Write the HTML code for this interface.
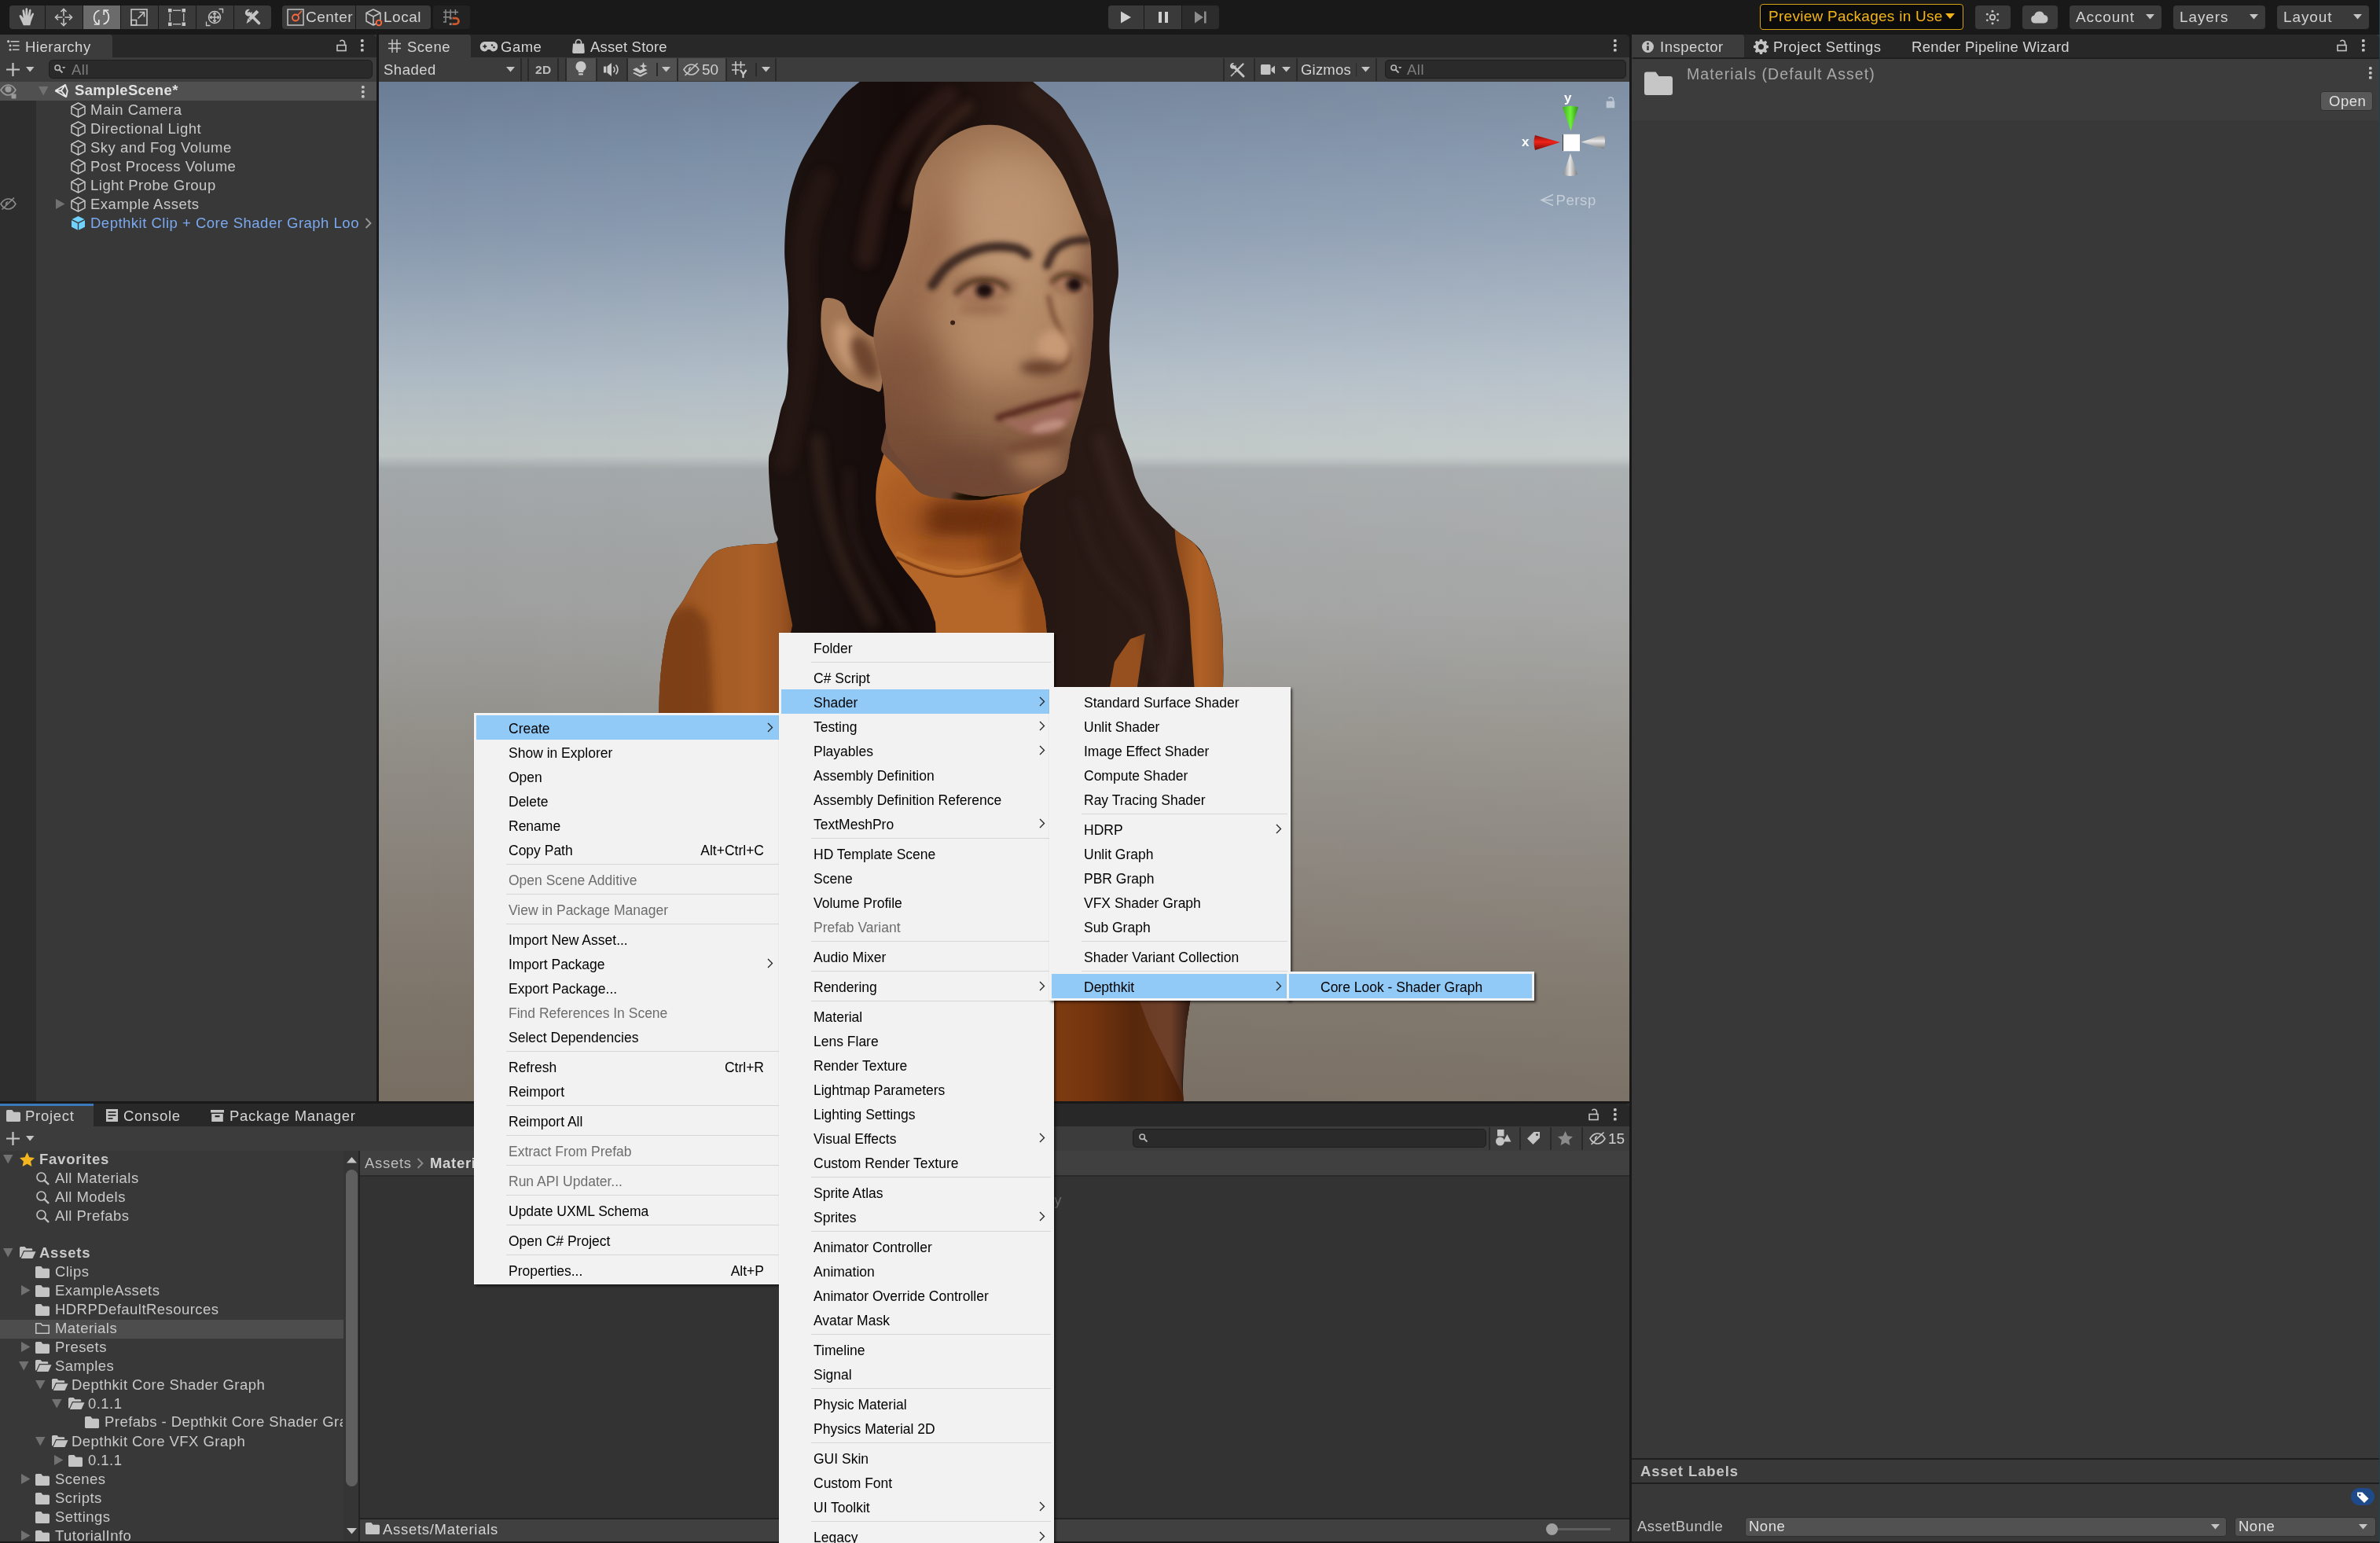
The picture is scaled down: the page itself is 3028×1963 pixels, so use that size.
<!DOCTYPE html>
<html><head><meta charset="utf-8"><title>Unity</title>
<style>
*{box-sizing:border-box;margin:0;padding:0}
html,body{width:3028px;height:1963px;overflow:hidden;background:#191919}
body{position:relative;font-family:"Liberation Sans",sans-serif;font-size:18.5px;letter-spacing:.5px;color:#c9c9c9;-webkit-font-smoothing:antialiased}
.a{position:absolute}
.t{position:absolute;white-space:pre;line-height:24px;height:24px}
.b{font-weight:700}
svg{position:absolute;overflow:visible}
.m{position:absolute;background:#f2f2f2;border:1px solid #f7f5f3;box-shadow:2px 2px 3px rgba(0,0,0,.6);font-size:17.5px;letter-spacing:0;color:#000}
.m .i{position:absolute;left:2px;right:2px;height:31px;line-height:34px;white-space:pre}
.m .i span{position:absolute}
.m .h{background:#91c9f7}
.m .d{color:#6d6d6d}
.m .s{position:absolute;height:1px;background:#d7d7d7}
</style></head><body><div id="w" style="position:absolute;left:0;top:0;width:3028px;height:1963px;will-change:transform">
<div class="a" style="left:0px;top:0px;width:3028px;height:44px;background:#191919;"></div>
<div class="a" style="left:12px;top:7px;width:45px;height:30px;background:#3a3a3a;border-radius:4px 0 0 4px;"></div>
<div class="a" style="left:58px;top:7px;width:47px;height:30px;background:#3a3a3a;"></div>
<div class="a" style="left:106px;top:7px;width:47px;height:30px;background:#6b6b6b;"></div>
<div class="a" style="left:154px;top:7px;width:47px;height:30px;background:#3a3a3a;"></div>
<div class="a" style="left:202px;top:7px;width:47px;height:30px;background:#3a3a3a;"></div>
<div class="a" style="left:250px;top:7px;width:47px;height:30px;background:#3a3a3a;"></div>
<div class="a" style="left:298px;top:7px;width:47px;height:30px;background:#3a3a3a;border-radius:0 4px 4px 0;"></div>
<svg style="left:20.5px;top:8.5px;" width="28" height="28" viewBox="1 1 23 23"><path fill="#c4c4c4" d="M4.200 11.200c-.9-1.600.8-2.600 1.900-1.400l2 2.600L7.100 5c-.2-1.600 1.700-1.900 2.100-.4l1.200 5.600V3.200c0-1.600 2.100-1.600 2.200 0l.3 7 1.300-6c.4-1.500 2.300-1 2 .5l-.9 6.600 1.900-3.600c.8-1.300 2.400-.4 1.800 1l-2.400 6.200c-.6 1.600-1 3.600-1.400 5.100H8.300c-.6-1.300-2.600-5.500-4.100-8.800z"/></svg>
<svg style="left:69px;top:10px;" width="24" height="24" viewBox="0 0 24 24"><g fill="none" stroke="#c4c4c4" stroke-width="1.6"><path d="M12 1.500v21M1.500 12h21"/><path d="M8.500 5L12 1.500 15.500 5M8.500 19l3.500 3.500 3.500-3.500M5 8.500L1.500 12 5 15.500M19 8.500l3.500 3.500-3.500 3.500"/></g><rect x="10.500" y="10.500" width="3" height="3" fill="#3a3a3a"/></svg>
<svg style="left:117px;top:10px;" width="24" height="24" viewBox="0 0 24 24"><g fill="none" stroke="#e4e4e4" stroke-width="1.700"><path d="M9.500 3.200A9.500 9.500 0 0 0 8.300 21"/><path d="M2.800 21h6v-6"/><path d="M14.500 20.800A9.500 9.500 0 0 0 15.700 3"/><path d="M21.200 3h-6v6"/></g></svg>
<svg style="left:165px;top:10px;" width="24" height="24" viewBox="0 0 24 24"><g fill="none" stroke="#c4c4c4" stroke-width="1.600"><rect x="2" y="2" width="20" height="20"/><rect x="2" y="15.500" width="6.500" height="6.500"/><path d="M10.500 13.500L18.500 5.500M12.500 5.500h6v6"/></g></svg>
<svg style="left:214px;top:11px;" width="22" height="22" viewBox="0 0 22 22"><g fill="#c4c4c4"><rect x="0" y="0" width="4.500" height="4.500"/><rect x="17.500" y="0" width="4.500" height="4.500"/><rect x="0" y="17.500" width="4.500" height="4.500"/><rect x="17.500" y="17.500" width="4.500" height="4.500"/><rect x="6" y="1.600" width="10" height="1.300"/><rect x="6" y="19.100" width="10" height="1.300"/><rect x="1.600" y="6" width="1.300" height="10"/><rect x="19.100" y="6" width="1.300" height="10"/></g></svg>
<svg style="left:261px;top:10px;" width="24" height="24" viewBox="0 0 24 24"><g fill="none" stroke="#c4c4c4" stroke-width="1.500"><circle cx="12" cy="12" r="7.500"/><path d="M12 6.500v11M6.500 12h11"/><path d="M10 8.300l2-2 2 2M10 15.700l2 2 2-2M8.300 10l-2 2 2 2M15.700 10l2 2-2 2"/><path d="M1.500 17.500v5h5M22.500 6.500v-5h-5" stroke-width="1.300"/></g></svg>
<svg style="left:310px;top:10px;" width="24" height="24" viewBox="0 0 24 24"><g stroke="#c4c4c4" fill="none"><path d="M7 7L19.500 19.500" stroke-width="3.600" stroke-linecap="round"/><path d="M17.800 4.200L7.500 14.500" stroke-width="4.200"/></g><path fill="#c4c4c4" d="M5.500 13.200l3.400 3.400-5.400 3.400z"/><path fill="#c4c4c4" d="M1.800 6.300a4.600 4.600 0 0 1 6-4.400L5 4.700l.5 2.300 2.300.500 2.800-2.800a4.600 4.600 0 0 1-4.400 6c-2.500 0-4.400-2-4.400-4.400z"/><path d="M19.300 2.700l2.200 2.200" stroke="#3a3a3a" stroke-width="1.200"/></svg>
<div class="a" style="left:359px;top:7px;width:93px;height:30px;background:#3a3a3a;border-radius:4px 0 0 4px;"></div>
<div class="a" style="left:453px;top:7px;width:95px;height:30px;background:#3a3a3a;border-radius:0 4px 4px 0;"></div>
<div class="a" style="left:551px;top:7px;width:47px;height:30px;background:#222;border-radius:4px;"></div>
<svg style="left:365px;top:11px;" width="22" height="22" viewBox="0 0 22 22"><rect x="1" y="1" width="20" height="20" fill="none" stroke="#c4c4c4" stroke-width="1.500"/><circle cx="11" cy="11.500" r="4" fill="none" stroke="#ff6a3d" stroke-width="1.800"/><path d="M14 8l5-5" stroke="#ff6a3d" stroke-width="1.500"/></svg>
<div class="t " style="left:389px;top:10px;font-size:19px;color:#d2d2d2">Center</div>
<svg style="left:464px;top:10px;" width="26" height="24" viewBox="0 0 26 24"><g fill="none" stroke="#c4c4c4" stroke-width="1.500" stroke-linejoin="round"><path d="M11 2l9 4.500v10.500l-9 5-9-5V6.500z"/><path d="M2 6.500l9 4.500 9-4.500M11 11v11"/></g><circle cx="18" cy="19" r="3.300" fill="#3a3a3a" stroke="#ff6a3d" stroke-width="1.800"/></svg>
<div class="t " style="left:488px;top:10px;font-size:19px;color:#d2d2d2">Local</div>
<svg style="left:564px;top:12px;" width="21" height="21" viewBox="0 0 21 21"><g fill="none" stroke="#8a8a8a" stroke-width="1.500"><path d="M3 0v16M9.200 0v9.500M15.400 0v7M0 3.500h19M0 9.700h9M0 15.900h4"/></g><g fill="#8a8a8a"><rect x="7.800" y="9.800" width="2.800" height="2.800"/><rect x="7.800" y="17.200" width="2.800" height="2.800"/></g><path d="M11.500 11.200h4.300a3.700 3.700 0 0 1 0 7.400h-4.300" fill="none" stroke="#c9572e" stroke-width="2.800"/></svg>
<div class="a" style="left:1410px;top:7px;width:45px;height:30px;background:#3a3a3a;border-radius:4px 0 0 4px;"></div>
<div class="a" style="left:1456px;top:7px;width:47px;height:30px;background:#3a3a3a;"></div>
<div class="a" style="left:1504px;top:7px;width:47px;height:30px;background:#2c2c2c;border-radius:0 4px 4px 0;"></div>
<svg style="left:1425px;top:14px;" width="16" height="16" viewBox="0 0 16 16"><path d="M1 .500L14 8 1 15.500z" fill="#d0d0d0"/></svg>
<svg style="left:1473px;top:14px;" width="14" height="16" viewBox="0 0 14 16"><rect x="1" y="1" width="4" height="14" fill="#d0d0d0"/><rect x="9" y="1" width="4" height="14" fill="#d0d0d0"/></svg>
<svg style="left:1520px;top:14px;" width="16" height="16" viewBox="0 0 16 16"><path d="M0 .500L11 8 0 15.500z" fill="#8c8c8c"/><rect x="12" y=".500" width="2.600" height="15" fill="#8c8c8c"/></svg>
<div class="a" style="left:2239px;top:5px;width:259px;height:33px;background:#0b0b0b;border:1.500px solid #d6a013;border-radius:4px;"></div>
<div class="t " style="left:2250px;top:9px;color:#f2b418;font-size:19px;letter-spacing:.27px">Preview Packages in Use</div>
<svg style="left:2475px;top:17px;" width="13" height="8" viewBox="0 0 13 8"><path d="M0 0h12L6 7z" fill="#f2b418"/></svg>
<div class="a" style="left:2513px;top:7px;width:45px;height:30px;background:#3a3a3a;border-radius:4px;"></div>
<svg style="left:2524px;top:11px;" width="22" height="22" viewBox="0 0 22 22"><circle cx="11" cy="11" r="3.200" fill="none" stroke="#c4c4c4" stroke-width="1.800"/><g fill="#c4c4c4"><circle cx="11" cy="3.300" r="1.500"/><circle cx="11" cy="18.700" r="1.500"/><circle cx="4.300" cy="7.200" r="1.400"/><circle cx="17.700" cy="7.200" r="1.400"/><circle cx="4.300" cy="14.800" r="1.400"/><circle cx="17.700" cy="14.800" r="1.400"/></g></svg>
<div class="a" style="left:2573px;top:7px;width:45px;height:30px;background:#3a3a3a;border-radius:4px;"></div>
<svg style="left:2583px;top:14px;" width="24" height="16" viewBox="0 0 24 16"><path fill="#c4c4c4" d="M6 15.500a5 5 0 0 1-.8-9.900A6.500 6.500 0 0 1 17.700 5a5.300 5.300 0 0 1 .3 10.500z"/></svg>
<div class="a" style="left:2633px;top:7px;width:117px;height:30px;background:#3a3a3a;border-radius:4px;"></div>
<div class="t " style="left:2641px;top:10px;font-size:19px;letter-spacing:.9px;color:#d2d2d2">Account</div>
<svg style="left:2730px;top:18px;" width="12" height="8" viewBox="0 0 12 8"><path d="M0 0h11L5.500 6.500z" fill="#c4c4c4"/></svg>
<div class="a" style="left:2765px;top:7px;width:117px;height:30px;background:#3a3a3a;border-radius:4px;"></div>
<div class="t " style="left:2773px;top:10px;font-size:19px;letter-spacing:.9px;color:#d2d2d2">Layers</div>
<svg style="left:2862px;top:18px;" width="12" height="8" viewBox="0 0 12 8"><path d="M0 0h11L5.500 6.500z" fill="#c4c4c4"/></svg>
<div class="a" style="left:2897px;top:7px;width:117px;height:30px;background:#3a3a3a;border-radius:4px;"></div>
<div class="t " style="left:2905px;top:10px;font-size:19px;letter-spacing:.9px;color:#d2d2d2">Layout</div>
<svg style="left:2994px;top:18px;" width="12" height="8" viewBox="0 0 12 8"><path d="M0 0h11L5.500 6.500z" fill="#c4c4c4"/></svg>
<div class="a" style="left:0px;top:44px;width:479px;height:1357px;background:#383838;"></div>
<div class="a" style="left:0px;top:44px;width:479px;height:29px;background:#282828;border-radius:0 5px 0 0;"></div>
<div class="a" style="left:0px;top:44px;width:143px;height:29px;background:#3c3c3c;border-radius:0 4px 0 0;"></div>
<svg style="left:9px;top:51px;" width="17" height="14" viewBox="0 0 17 14"><g fill="#c4c4c4"><circle cx="1.600" cy="1.700" r="1.600"/><circle cx="4" cy="7" r="1.500"/><circle cx="4" cy="12.200" r="1.500"/><rect x="4.500" y="1" width="11" height="1.500"/><rect x="7" y="6.300" width="8.500" height="1.500"/><rect x="7" y="11.500" width="8.500" height="1.500"/></g></svg>
<div class="t " style="left:32px;top:47.5px;color:#d4d4d4">Hierarchy</div>
<svg style="left:428px;top:49px;" width="14" height="17" viewBox="0 0 14 17"><g fill="none" stroke="#c4c4c4" stroke-width="1.600"><rect x="1" y="8.500" width="11" height="7"/><path d="M10.500 8.500V5.500a3.300 3.300 0 0 0-6-1.800"/></g></svg>
<svg style="left:458.5px;top:50px;" width="4" height="16" viewBox="0 0 4 16"><g fill="#c4c4c4"><rect x="0" y="0" width="3.600" height="3.600" rx="1.200"/><rect x="0" y="6" width="3.600" height="3.600" rx="1.200"/><rect x="0" y="12" width="3.600" height="3.600" rx="1.200"/></g></svg>
<div class="a" style="left:0px;top:73px;width:479px;height:31px;background:#3c3c3c;"></div>
<svg style="left:8px;top:80px;" width="17" height="17" viewBox="0 0 17 17"><path d="M8.500 0v17M0 8.500h17" stroke="#c4c4c4" stroke-width="2.200"/></svg>
<svg style="left:33px;top:85px;" width="11" height="7" viewBox="0 0 11 7"><path d="M0 0h10.500L5.200 6.500z" fill="#c4c4c4"/></svg>
<div class="a" style="left:62px;top:76px;width:412px;height:24px;background:#2a2a2a;border:1px solid #1e1e1e;border-radius:5px;"></div>
<svg style="left:69px;top:82px;" width="15" height="12" viewBox="0 0 15 12"><circle cx="4.200" cy="4.200" r="3.200" fill="none" stroke="#b4b4b4" stroke-width="1.600"/><path d="M6.500 6.500L10.500 10.500" stroke="#b4b4b4" stroke-width="1.900"/><path d="M10 3h4.500L12.200 5.500z" fill="#b4b4b4"/></svg>
<div class="t " style="left:91px;top:76.5px;color:#7e7e7e">All</div>
<div class="a" style="left:0px;top:127px;width:46px;height:1274px;background:#2d2d2d;"></div>
<div class="a" style="left:0px;top:104px;width:479px;height:23.5px;background:#505050;"></div>
<svg style="left:0px;top:107px;" width="22" height="19" viewBox="0 0 22 19"><path d="M1 7.500C4 2.500 8 1 10.500 1s6.500 1.500 9.500 6.500c-3 5-7 6.500-9.500 6.500S4 12.500 1 7.500z" fill="none" stroke="#9a9a9a" stroke-width="1.700"/><circle cx="10.500" cy="6.500" r="4" fill="#9a9a9a"/><rect x="14.500" y="12.500" width="6" height="6" rx="1" fill="#9a9a9a"/></svg>
<svg style="left:49px;top:109.5px;" width="13" height="12" viewBox="0 0 13 12"><path d="M0 0h12.500L6.200 11.500z" fill="#717171"/></svg>
<svg style="left:69px;top:105.5px;" width="18" height="18" viewBox="0 0 18 18"><g fill="none" stroke="#e8e8e8" stroke-width="1.800" stroke-linejoin="miter"><path d="M1.200 9.500L13.500 2.200M1.200 9.500L14.800 17.200M1.200 9.500h7.800M9 9.500L14.200 1.300M9 9.500L15.600 17.800M13.900 1.600L16.800 9.500 15.200 17.500"/></g></svg>
<div class="t b" style="left:95px;top:102.5px;color:#e0e0e0;letter-spacing:.35px">SampleScene*</div>
<svg style="left:459.5px;top:109px;" width="4" height="16" viewBox="0 0 4 16"><g fill="#c4c4c4"><rect x="0" y="0" width="3.600" height="3.600" rx="1.200"/><rect x="0" y="6" width="3.600" height="3.600" rx="1.200"/><rect x="0" y="12" width="3.600" height="3.600" rx="1.200"/></g></svg>
<svg style="left:90px;top:130.0px;" width="19" height="20" viewBox="0 0 19 20"><g fill="none" stroke="#c8c8c8" stroke-width="1.500" stroke-linejoin="round"><path d="M9.500 1l8.500 4.300v9.400L9.500 19 1 14.700V5.300z"/><path d="M1 5.300l8.500 4.400L18 5.300M9.500 9.700V19"/></g></svg>
<div class="t " style="left:115px;top:127.5px;">Main Camera</div>
<svg style="left:90px;top:154.0px;" width="19" height="20" viewBox="0 0 19 20"><g fill="none" stroke="#c8c8c8" stroke-width="1.500" stroke-linejoin="round"><path d="M9.500 1l8.500 4.300v9.400L9.500 19 1 14.700V5.300z"/><path d="M1 5.300l8.500 4.400L18 5.300M9.500 9.700V19"/></g></svg>
<div class="t " style="left:115px;top:151.5px;">Directional Light</div>
<svg style="left:90px;top:178.0px;" width="19" height="20" viewBox="0 0 19 20"><g fill="none" stroke="#c8c8c8" stroke-width="1.500" stroke-linejoin="round"><path d="M9.500 1l8.500 4.300v9.400L9.500 19 1 14.700V5.300z"/><path d="M1 5.300l8.500 4.400L18 5.300M9.500 9.700V19"/></g></svg>
<div class="t " style="left:115px;top:175.5px;">Sky and Fog Volume</div>
<svg style="left:90px;top:202.0px;" width="19" height="20" viewBox="0 0 19 20"><g fill="none" stroke="#c8c8c8" stroke-width="1.500" stroke-linejoin="round"><path d="M9.500 1l8.500 4.300v9.400L9.500 19 1 14.700V5.300z"/><path d="M1 5.300l8.500 4.400L18 5.300M9.500 9.700V19"/></g></svg>
<div class="t " style="left:115px;top:199.5px;">Post Process Volume</div>
<svg style="left:90px;top:226.0px;" width="19" height="20" viewBox="0 0 19 20"><g fill="none" stroke="#c8c8c8" stroke-width="1.500" stroke-linejoin="round"><path d="M9.500 1l8.500 4.300v9.400L9.500 19 1 14.700V5.300z"/><path d="M1 5.300l8.500 4.400L18 5.300M9.500 9.700V19"/></g></svg>
<div class="t " style="left:115px;top:223.5px;">Light Probe Group</div>
<svg style="left:90px;top:250.0px;" width="19" height="20" viewBox="0 0 19 20"><g fill="none" stroke="#c8c8c8" stroke-width="1.500" stroke-linejoin="round"><path d="M9.500 1l8.500 4.300v9.400L9.500 19 1 14.700V5.300z"/><path d="M1 5.300l8.500 4.400L18 5.300M9.500 9.700V19"/></g></svg>
<div class="t " style="left:115px;top:247.5px;">Example Assets</div>
<svg style="left:71px;top:253px;" width="12" height="13" viewBox="0 0 12 13"><path d="M0 0l11.500 6.500L0 13z" fill="#717171"/></svg>
<svg style="left:0px;top:250px;" width="22" height="18" viewBox="0 0 22 18"><path d="M1 9.500C4 4.500 8 3 10.500 3s6.500 1.500 9.500 6.500c-3 5-7 6.500-9.500 6.500S4 14.500 1 9.500z" fill="none" stroke="#8a8a8a" stroke-width="1.600"/><path d="M2.500 16.500L18 1.500" stroke="#8a8a8a" stroke-width="1.600"/><path d="M10.500 6a3.500 3.500 0 0 0-3 5.500z" fill="#8a8a8a"/></svg>
<svg style="left:90px;top:274px;" width="19" height="20" viewBox="0 0 19 20"><path d="M9.500 1l8.500 4.300v9.400L9.500 19 1 14.700V5.300z" fill="#6fd2ff"/><path d="M1 5.300l8.500 4.400L18 5.300M9.500 9.700V19" fill="none" stroke="#3a3a3a" stroke-width="1.300"/></svg>
<div class="t " style="left:115px;top:271.5px;color:#7aa9ef">Depthkit Clip + Core Shader Graph Loo</div>
<svg style="left:464px;top:277px;" width="9" height="14" viewBox="0 0 9 14"><path d="M1.500 1l6 6-6 6" fill="none" stroke="#9a9a9a" stroke-width="1.800"/></svg>
<div class="a" style="left:482px;top:44px;width:1591px;height:29px;background:#282828;border-radius:0 5px 0 0;"></div>
<div class="a" style="left:482px;top:44px;width:117px;height:29px;background:#3c3c3c;border-radius:0 4px 0 0;"></div>
<svg style="left:494px;top:50px;" width="16" height="17" viewBox="0 0 16 17"><g stroke="#c4c4c4" stroke-width="1.500" fill="none"><path d="M5 0v17M11 0v17M0 5.500h16M0 11.500h16"/></g></svg>
<div class="t " style="left:518px;top:47.5px;color:#d4d4d4">Scene</div>
<svg style="left:611px;top:53px;" width="22" height="13" viewBox="0 0 22 13"><path fill="#c4c4c4" d="M5.500 0h11a5.500 6 0 0 1 0 12.500c-1.800 0-3-1-4-2.500h-3c-1 1.500-2.200 2.500-4 2.500a5.500 6 0 0 1 0-12.500z"/><g fill="#282828"><rect x="3.300" y="5.200" width="5" height="1.700"/><rect x="4.950" y="3.550" width="1.700" height="5"/><circle cx="15" cy="4.500" r="1.200"/><circle cx="17.500" cy="7.200" r="1.200"/></g></svg>
<div class="t " style="left:637px;top:47.5px;color:#d4d4d4">Game</div>
<svg style="left:728px;top:50px;" width="16" height="18" viewBox="0 0 16 18"><path fill="#c4c4c4" d="M1 5.500h14l.8 10.500a1.800 1.800 0 0 1-1.800 2H2a1.800 1.800 0 0 1-1.800-2z"/><path d="M4.500 7V4a3.500 3.500 0 0 1 7 0v3" fill="none" stroke="#c4c4c4" stroke-width="1.600"/></svg>
<div class="t " style="left:751px;top:47.5px;color:#d4d4d4;letter-spacing:.2px">Asset Store</div>
<svg style="left:2052.5px;top:50px;" width="4" height="16" viewBox="0 0 4 16"><g fill="#c4c4c4"><rect x="0" y="0" width="3.600" height="3.600" rx="1.200"/><rect x="0" y="6" width="3.600" height="3.600" rx="1.200"/><rect x="0" y="12" width="3.600" height="3.600" rx="1.200"/></g></svg>
<div class="a" style="left:482px;top:73px;width:1591px;height:31px;background:#3c3c3c;"></div>
<div class="t " style="left:488px;top:76.5px;color:#d4d4d4">Shaded</div>
<svg style="left:644px;top:85px;" width="12" height="8" viewBox="0 0 12 8"><path d="M0 0h11L5.500 6.500z" fill="#c4c4c4"/></svg>
<div class="a" style="left:662px;top:74px;width:1.5px;height:29px;background:#2a2a2a;"></div>
<div class="a" style="left:671px;top:74px;width:1.5px;height:29px;background:#2a2a2a;"></div>
<div class="a" style="left:709px;top:74px;width:1.5px;height:29px;background:#2a2a2a;"></div>
<div class="a" style="left:719px;top:74px;width:1.5px;height:29px;background:#2a2a2a;"></div>
<div class="a" style="left:758px;top:74px;width:1.5px;height:29px;background:#2a2a2a;"></div>
<div class="a" style="left:797px;top:74px;width:1.5px;height:29px;background:#2a2a2a;"></div>
<div class="a" style="left:861px;top:74px;width:1.5px;height:29px;background:#2a2a2a;"></div>
<div class="a" style="left:923px;top:74px;width:1.5px;height:29px;background:#2a2a2a;"></div>
<div class="a" style="left:986px;top:74px;width:1.5px;height:29px;background:#2a2a2a;"></div>
<div class="a" style="left:1556px;top:74px;width:1.5px;height:29px;background:#2a2a2a;"></div>
<div class="a" style="left:1595px;top:74px;width:1.5px;height:29px;background:#2a2a2a;"></div>
<div class="a" style="left:1649px;top:74px;width:1.5px;height:29px;background:#2a2a2a;"></div>
<div class="a" style="left:1750px;top:74px;width:1.5px;height:29px;background:#2a2a2a;"></div>
<div class="t " style="left:681px;top:76.5px;color:#bcbcbc;font-weight:700;font-size:15.5px;letter-spacing:.3px">2D</div>
<div class="a" style="left:720.5px;top:74px;width:37.5px;height:29px;background:#505050;"></div>
<div class="a" style="left:798.5px;top:74px;width:62.5px;height:29px;background:#505050;"></div>
<div class="a" style="left:862.5px;top:74px;width:60.5px;height:29px;background:#505050;"></div>
<svg style="left:732px;top:78px;" width="14" height="20" viewBox="0 0 14 20"><path fill="#c8c8c8" d="M7 0a6.500 6.500 0 0 1 3.300 12.100V14H3.700v-1.900A6.500 6.500 0 0 1 7 0z"/><rect x="4" y="15.300" width="6" height="2.300" rx="1" fill="#c8c8c8"/></svg>
<svg style="left:768px;top:80px;" width="20" height="17" viewBox="0 0 20 17"><rect x="0" y="4.500" width="3.300" height="8" fill="#c8c8c8"/><path d="M4.500 4.500L10 0v17l-5.500-4.500z" fill="#c8c8c8"/><path d="M12.500 5a5 5 0 0 1 0 7M15.500 2.500a8.500 8.500 0 0 1 0 12" fill="none" stroke="#c8c8c8" stroke-width="1.700"/></svg>
<svg style="left:805px;top:79px;" width="22" height="19" viewBox="0 0 22 19"><path fill="#c8c8c8" d="M0 9.500l5-2.500 4.500 3.500 5-2.500 4 2-9 4.500zM0 14l2.200-1.100 7.300 3.600 7.300-3.600L19 14l-9.500 4.800z"/><path fill="#c8c8c8" d="M13.500 0l1.300 3.700L18.500 5l-3.700 1.300L13.500 10l-1.300-3.700L8.500 5l3.700-1.300z"/></svg>
<div class="a" style="left:835px;top:80px;width:1.5px;height:17px;background:#2a2a2a;"></div>
<svg style="left:842px;top:85px;" width="12" height="8" viewBox="0 0 12 8"><path d="M0 0h11L5.500 6.500z" fill="#c4c4c4"/></svg>
<svg style="left:869px;top:79px;" width="22" height="19" viewBox="0 0 22 19"><path d="M1 9.500C4 4.500 8 3 10.500 3s6.500 1.500 9.500 6.500c-3 5-7 6.500-9.500 6.500S4 14.500 1 9.500z" fill="none" stroke="#c4c4c4" stroke-width="1.600"/><path d="M2.500 17L18.500 1.500" stroke="#c4c4c4" stroke-width="1.700"/><path d="M10.500 6a3.500 3.500 0 0 0-3 5.500z" fill="#c4c4c4"/></svg>
<div class="t " style="left:893px;top:76.5px;color:#d0d0d0;letter-spacing:0;font-size:19px">50</div>
<svg style="left:931px;top:78px;" width="22" height="22" viewBox="0 0 22 22"><g stroke="#c8c8c8" stroke-width="1.600" fill="none"><path d="M5 0v17M11.500 0v9M0 4.500h17M0 11h9.500"/></g><path d="M11 11l3.500 5v5M18.500 11L15 16" stroke="#c8c8c8" stroke-width="2.200" fill="none"/></svg>
<div class="a" style="left:961px;top:80px;width:1.5px;height:17px;background:#2a2a2a;"></div>
<svg style="left:968.5px;top:85px;" width="12" height="8" viewBox="0 0 12 8"><path d="M0 0h11L5.500 6.500z" fill="#c4c4c4"/></svg>
<svg style="left:1563px;top:78px;" width="22" height="22" viewBox="0 0 22 22"><g stroke="#c4c4c4" fill="none" stroke-linecap="round"><path d="M6 6L19 19" stroke-width="3"/><path d="M18.500 3.500L8.500 13.500" stroke-width="2.400"/><path d="M7 15L3.500 18.500" stroke-width="1.700"/></g><path fill="#c4c4c4" d="M2 6a4 4 0 0 1 5.200-3.800L4.800 4.600l.4 2 2 .4 2.400-2.400A4 4 0 0 1 5.800 9.800C3.700 9.800 2 8.100 2 6z"/></svg>
<svg style="left:1604px;top:82px;" width="19" height="14" viewBox="0 0 19 14"><rect x="0" y="0" width="12.500" height="13" rx="1.500" fill="#c4c4c4"/><path d="M13.500 5L18 1.500v10.500L13.500 8.500z" fill="#c4c4c4"/></svg>
<svg style="left:1631px;top:85px;" width="12" height="8" viewBox="0 0 12 8"><path d="M0 0h11L5.500 6.500z" fill="#c4c4c4"/></svg>
<div class="t " style="left:1655px;top:76.5px;color:#d4d4d4;letter-spacing:.2px">Gizmos</div>
<div class="a" style="left:1724.5px;top:80px;width:1.5px;height:17px;background:#2a2a2a;"></div>
<svg style="left:1731.5px;top:85px;" width="12" height="8" viewBox="0 0 12 8"><path d="M0 0h11L5.500 6.500z" fill="#c4c4c4"/></svg>
<div class="a" style="left:1762px;top:76px;width:307px;height:24px;background:#2a2a2a;border:1px solid #1e1e1e;border-radius:5px;"></div>
<svg style="left:1769px;top:82px;" width="15" height="12" viewBox="0 0 15 12"><circle cx="4.200" cy="4.200" r="3.200" fill="none" stroke="#b4b4b4" stroke-width="1.600"/><path d="M6.500 6.500L10.500 10.500" stroke="#b4b4b4" stroke-width="1.900"/><path d="M10 3h4.500L12.200 5.500z" fill="#b4b4b4"/></svg>
<div class="t " style="left:1790px;top:76.5px;color:#7e7e7e">All</div>
<svg style="left:482px;top:104px;overflow:hidden" width="1591" height="1297" viewBox="482 104 1591 1297"><defs>
<linearGradient id="sky" x1="0" y1="104" x2="0" y2="1401" gradientUnits="userSpaceOnUse">
<stop offset="0" stop-color="#6b7d95"/>
<stop offset="0.0694" stop-color="#778ba3"/>
<stop offset="0.151" stop-color="#8899ae"/>
<stop offset="0.29" stop-color="#aebac4"/>
<stop offset="0.3516" stop-color="#bbc3c3"/>
<stop offset="0.367" stop-color="#bcc3c2"/>
<stop offset="0.3801" stop-color="#a2a7a9"/>
<stop offset="0.5212" stop-color="#9e9f9e"/>
<stop offset="0.65" stop-color="#928f88"/>
<stop offset="0.768" stop-color="#88827a"/>
<stop offset="0.9" stop-color="#7e756a"/>
<stop offset="1" stop-color="#786e62"/>
</linearGradient>
<linearGradient id="skyh" x1="482" y1="0" x2="2073" y2="0" gradientUnits="userSpaceOnUse">
<stop offset="0" stop-color="#fff" stop-opacity="0"/><stop offset="1" stop-color="#fff" stop-opacity=".14"/></linearGradient>
</defs>
<rect x="482" y="104" width="1591" height="1297" fill="url(#sky)"/>
<linearGradient id="gmg" x1="0" y1="590" x2="0" y2="1401" gradientUnits="userSpaceOnUse"><stop offset="0" stop-color="#fff" stop-opacity=".75"/><stop offset="1" stop-color="#fff" stop-opacity=".2"/></linearGradient>
<mask id="gm" maskUnits="userSpaceOnUse" x="482" y="104" width="1591" height="1297"><rect x="482" y="104" width="1591" height="486" fill="#fff"/><rect x="482" y="590" width="1591" height="811" fill="url(#gmg)"/></mask>
<rect x="482" y="104" width="1591" height="1297" fill="url(#skyh)" mask="url(#gm)"/>
<defs>
<linearGradient id="hairg" x1="1000" y1="0" x2="1420" y2="0" gradientUnits="userSpaceOnUse">
<stop offset="0" stop-color="#1c1210"/><stop offset="0.35" stop-color="#150b0a"/><stop offset="0.7" stop-color="#241612"/><stop offset="1" stop-color="#2a1a16"/></linearGradient>
<linearGradient id="swl" x1="840" y1="0" x2="1010" y2="0" gradientUnits="userSpaceOnUse">
<stop offset="0" stop-color="#955224"/><stop offset="0.3" stop-color="#a25a25"/><stop offset="0.7" stop-color="#aa6027"/><stop offset="0.9" stop-color="#9a5422"/><stop offset="1" stop-color="#864619"/></linearGradient>
<linearGradient id="swc" x1="0" y1="600" x2="0" y2="880" gradientUnits="userSpaceOnUse">
<stop offset="0" stop-color="#b5652a"/><stop offset="0.35" stop-color="#c07030"/><stop offset="0.6" stop-color="#b4642a"/><stop offset="1" stop-color="#b86a2c"/></linearGradient>
<radialGradient id="faceg" cx="1285" cy="330" r="260" gradientUnits="userSpaceOnUse">
<stop offset="0" stop-color="#be9572"/><stop offset="0.45" stop-color="#ae8461"/><stop offset="0.8" stop-color="#91674a"/><stop offset="1" stop-color="#76503a"/></radialGradient>
<filter id="bl6" filterUnits="userSpaceOnUse" x="482" y="104" width="1591" height="1297"><feGaussianBlur stdDeviation="6"/></filter>
<filter id="bl3" filterUnits="userSpaceOnUse" x="482" y="104" width="1591" height="1297"><feGaussianBlur stdDeviation="3"/></filter>
<filter id="bl12" filterUnits="userSpaceOnUse" x="482" y="104" width="1591" height="1297"><feGaussianBlur stdDeviation="12"/></filter>
<filter id="bl20" filterUnits="userSpaceOnUse" x="482" y="104" width="1591" height="1297"><feGaussianBlur stdDeviation="20"/></filter>
<clipPath id="silc"><path d="M1098.7,100.0 C1094.9,103.2 1082.5,112.5 1076.0,119.0 C1069.5,125.5 1065.4,131.4 1060.0,139.0 C1054.6,146.6 1049.1,156.2 1043.7,164.8 C1038.3,173.4 1032.1,182.6 1027.5,190.7 C1022.9,198.8 1019.5,204.8 1016.0,213.4 C1012.5,222.0 1008.8,233.3 1006.4,242.5 C1004.0,251.7 1002.8,259.9 1001.6,268.5 C1000.4,277.1 999.5,284.7 999.0,294.4 C998.5,304.1 997.9,316.0 998.3,326.8 C998.7,337.6 1000.8,348.4 1001.6,359.2 C1002.4,370.0 1003.2,378.1 1003.2,391.6 C1003.2,405.1 1001.6,426.5 1001.6,440.0 C1001.6,453.5 1003.3,462.3 1003.0,472.6 C1002.7,482.9 1001.6,493.6 1000.0,501.7 C998.4,509.8 995.4,514.0 993.5,521.0 C991.6,528.0 990.5,535.7 988.6,543.8 C986.7,551.9 983.8,562.9 982.0,569.8 C980.2,576.7 978.4,575.5 978.0,585.0 C977.6,594.5 978.6,612.7 979.7,627.0 C980.8,641.3 983.3,660.6 984.7,671.0 C986.1,681.4 993.0,685.8 988.0,689.4 C983.0,693.0 965.7,691.4 954.5,692.8 C943.3,694.2 929.2,695.3 920.8,697.8 C912.4,700.3 909.6,702.4 904.0,708.0 C898.4,713.6 892.8,722.4 887.2,731.4 C881.6,740.4 876.0,752.2 870.4,761.7 C864.8,771.2 857.8,778.5 853.6,788.6 C849.4,798.7 847.4,809.9 845.2,822.2 C843.0,834.5 841.3,848.5 840.2,862.5 C839.1,876.5 838.9,883.3 838.5,906.2 C838.1,929.1 838.1,917.5 838.0,1000.0 C837.9,1082.5 838.0,1334.2 838.0,1401.0 L1506.0,1401.0 C1505.8,1397.5 1504.8,1390.2 1505.0,1380.0 C1505.2,1369.8 1506.2,1353.3 1507.0,1340.0 C1507.8,1326.7 1508.8,1311.2 1510.0,1300.0 C1511.2,1288.8 1511.0,1298.0 1514.0,1273.0 C1517.0,1248.0 1523.7,1187.2 1528.0,1150.0 C1532.3,1112.8 1536.3,1083.3 1540.0,1050.0 C1543.7,1016.7 1547.3,979.6 1550.0,950.0 C1552.7,920.4 1555.0,892.8 1556.0,872.6 C1557.0,852.4 1556.2,841.8 1556.0,828.9 C1555.8,816.0 1555.6,806.5 1554.5,795.3 C1553.4,784.1 1551.4,771.8 1549.4,761.7 C1547.4,751.6 1545.5,743.8 1542.7,734.8 C1539.9,725.8 1536.5,715.2 1532.6,707.9 C1528.6,700.6 1525.2,696.6 1519.0,691.0 C1512.8,685.4 1502.3,679.9 1495.6,674.3 C1488.9,668.7 1484.9,663.7 1478.8,657.5 C1472.7,651.3 1464.3,645.1 1458.7,637.3 C1453.1,629.4 1448.6,618.8 1445.2,610.4 C1441.8,602.0 1441.3,595.3 1438.5,586.9 C1435.7,578.5 1430.5,565.5 1428.4,560.0 C1426.3,554.5 1427.5,559.0 1426.0,553.6 C1424.5,548.2 1421.1,536.4 1419.5,527.7 C1417.9,519.1 1417.3,511.4 1416.2,501.7 C1415.1,492.0 1413.8,479.6 1413.0,469.3 C1412.2,459.1 1411.4,450.4 1411.4,440.2 C1411.4,429.9 1411.9,418.1 1413.0,407.8 C1414.1,397.5 1416.3,387.8 1417.9,378.6 C1419.5,369.4 1422.0,361.3 1422.7,352.7 C1423.4,344.1 1422.5,335.4 1422.0,326.8 C1421.5,318.2 1420.7,309.5 1419.5,300.9 C1418.3,292.3 1416.8,283.6 1414.6,275.0 C1412.4,266.4 1408.9,256.6 1406.5,249.0 C1404.1,241.4 1402.7,237.2 1400.0,229.6 C1397.3,222.0 1394.1,212.3 1390.3,203.7 C1386.5,195.1 1382.2,186.5 1377.4,177.8 C1372.6,169.2 1366.1,159.4 1361.2,151.8 C1356.3,144.2 1353.6,138.3 1348.2,132.4 C1342.8,126.5 1335.3,121.6 1328.8,116.2 C1322.3,110.8 1312.5,102.7 1309.3,100.0Z"/></clipPath>
</defs>
<path d="M1098.7,100.0 C1094.9,103.2 1082.5,112.5 1076.0,119.0 C1069.5,125.5 1065.4,131.4 1060.0,139.0 C1054.6,146.6 1049.1,156.2 1043.7,164.8 C1038.3,173.4 1032.1,182.6 1027.5,190.7 C1022.9,198.8 1019.5,204.8 1016.0,213.4 C1012.5,222.0 1008.8,233.3 1006.4,242.5 C1004.0,251.7 1002.8,259.9 1001.6,268.5 C1000.4,277.1 999.5,284.7 999.0,294.4 C998.5,304.1 997.9,316.0 998.3,326.8 C998.7,337.6 1000.8,348.4 1001.6,359.2 C1002.4,370.0 1003.2,378.1 1003.2,391.6 C1003.2,405.1 1001.6,426.5 1001.6,440.0 C1001.6,453.5 1003.3,462.3 1003.0,472.6 C1002.7,482.9 1001.6,493.6 1000.0,501.7 C998.4,509.8 995.4,514.0 993.5,521.0 C991.6,528.0 990.5,535.7 988.6,543.8 C986.7,551.9 983.8,562.9 982.0,569.8 C980.2,576.7 978.4,575.5 978.0,585.0 C977.6,594.5 978.6,612.7 979.7,627.0 C980.8,641.3 983.3,660.6 984.7,671.0 C986.1,681.4 993.0,685.8 988.0,689.4 C983.0,693.0 965.7,691.4 954.5,692.8 C943.3,694.2 929.2,695.3 920.8,697.8 C912.4,700.3 909.6,702.4 904.0,708.0 C898.4,713.6 892.8,722.4 887.2,731.4 C881.6,740.4 876.0,752.2 870.4,761.7 C864.8,771.2 857.8,778.5 853.6,788.6 C849.4,798.7 847.4,809.9 845.2,822.2 C843.0,834.5 841.3,848.5 840.2,862.5 C839.1,876.5 838.9,883.3 838.5,906.2 C838.1,929.1 838.1,917.5 838.0,1000.0 C837.9,1082.5 838.0,1334.2 838.0,1401.0 L1506.0,1401.0 C1505.8,1397.5 1504.8,1390.2 1505.0,1380.0 C1505.2,1369.8 1506.2,1353.3 1507.0,1340.0 C1507.8,1326.7 1508.8,1311.2 1510.0,1300.0 C1511.2,1288.8 1511.0,1298.0 1514.0,1273.0 C1517.0,1248.0 1523.7,1187.2 1528.0,1150.0 C1532.3,1112.8 1536.3,1083.3 1540.0,1050.0 C1543.7,1016.7 1547.3,979.6 1550.0,950.0 C1552.7,920.4 1555.0,892.8 1556.0,872.6 C1557.0,852.4 1556.2,841.8 1556.0,828.9 C1555.8,816.0 1555.6,806.5 1554.5,795.3 C1553.4,784.1 1551.4,771.8 1549.4,761.7 C1547.4,751.6 1545.5,743.8 1542.7,734.8 C1539.9,725.8 1536.5,715.2 1532.6,707.9 C1528.6,700.6 1525.2,696.6 1519.0,691.0 C1512.8,685.4 1502.3,679.9 1495.6,674.3 C1488.9,668.7 1484.9,663.7 1478.8,657.5 C1472.7,651.3 1464.3,645.1 1458.7,637.3 C1453.1,629.4 1448.6,618.8 1445.2,610.4 C1441.8,602.0 1441.3,595.3 1438.5,586.9 C1435.7,578.5 1430.5,565.5 1428.4,560.0 C1426.3,554.5 1427.5,559.0 1426.0,553.6 C1424.5,548.2 1421.1,536.4 1419.5,527.7 C1417.9,519.1 1417.3,511.4 1416.2,501.7 C1415.1,492.0 1413.8,479.6 1413.0,469.3 C1412.2,459.1 1411.4,450.4 1411.4,440.2 C1411.4,429.9 1411.9,418.1 1413.0,407.8 C1414.1,397.5 1416.3,387.8 1417.9,378.6 C1419.5,369.4 1422.0,361.3 1422.7,352.7 C1423.4,344.1 1422.5,335.4 1422.0,326.8 C1421.5,318.2 1420.7,309.5 1419.5,300.9 C1418.3,292.3 1416.8,283.6 1414.6,275.0 C1412.4,266.4 1408.9,256.6 1406.5,249.0 C1404.1,241.4 1402.7,237.2 1400.0,229.6 C1397.3,222.0 1394.1,212.3 1390.3,203.7 C1386.5,195.1 1382.2,186.5 1377.4,177.8 C1372.6,169.2 1366.1,159.4 1361.2,151.8 C1356.3,144.2 1353.6,138.3 1348.2,132.4 C1342.8,126.5 1335.3,121.6 1328.8,116.2 C1322.3,110.8 1312.5,102.7 1309.3,100.0Z" fill="url(#hairg)"/>
<path d="M820.0,680.0 L838.5,906.2 L838.0,930.0 L1010.0,930.0 L1010.0,805.0 L1006.0,805.0 L1008.2,795.3 L1001.5,761.7 L994.8,728.0 L988.0,689.4 L988.0,680.0Z" fill="url(#swl)" clip-path="url(#silc)"/>
<g clip-path="url(#silc)"><path d="M830,930 L830,800 L850,780 L880,770 L900,790 L905,850 L908,930Z" fill="#7a3e18" opacity=".9" filter="url(#bl6)"/></g>
<defs><linearGradient id="swr" x1="1495" y1="0" x2="1556" y2="0" gradientUnits="userSpaceOnUse"><stop offset="0" stop-color="#8c4a1c"/><stop offset=".5" stop-color="#b06226"/><stop offset="1" stop-color="#9a5422"/></linearGradient></defs>
<path d="M1494.4,671.0 C1494.8,675.3 1495.3,686.7 1497.0,697.0 C1498.7,707.3 1502.2,720.5 1504.8,733.0 C1507.4,745.5 1510.9,759.0 1512.6,772.0 C1514.3,785.0 1514.1,798.0 1515.0,811.0 C1515.9,824.0 1517.0,838.5 1517.8,850.0 C1518.6,861.5 1519.6,875.0 1520.0,880.0 L1556.0,880.0 L1556.0,828.9 L1554.5,795.3 L1549.4,761.7 L1542.7,734.8 L1532.6,707.9 L1519.0,691.0 L1495.6,674.3Z" fill="url(#swr)"/>
<path d="M1411.0,880.0 L1418.0,842.0 L1438.0,813.0 L1457.0,806.0 L1453.0,832.0 L1446.0,880.0Z" fill="#96501f"/>
<g clip-path="url(#silc)">
<path d="M1205.7,122.7 C1199.2,128.6 1178.7,144.3 1166.8,158.3 C1154.9,172.4 1143.0,189.6 1134.4,206.9 C1125.7,224.2 1120.3,242.0 1114.9,262.0 C1109.5,282.0 1104.1,316.0 1102.0,326.8" fill="none" stroke="#3a241c" stroke-width="26" stroke-linecap="round" opacity="0.55" filter="url(#bl6)"/>
<path d="M1231.6,135.6 C1226.2,140.5 1208.9,152.9 1199.2,164.8 C1189.5,176.7 1180.8,191.8 1173.3,206.9 C1165.7,222.0 1157.1,247.4 1153.8,255.5" fill="none" stroke="#4a2e22" stroke-width="14" stroke-linecap="round" opacity="0.6" filter="url(#bl6)"/>
<path d="M1312.6,119.4 C1319.6,125.4 1342.3,140.5 1354.7,155.1 C1367.1,169.7 1378.4,189.1 1387.1,206.9 C1395.7,224.7 1403.3,252.8 1406.5,262.0" fill="none" stroke="#34201a" stroke-width="30" stroke-linecap="round" opacity="0.6" filter="url(#bl6)"/>
<path d="M1046.9,229.6 C1043.1,240.4 1028.6,272.8 1024.2,294.4 C1019.9,316.0 1021.0,337.6 1021.0,359.2 C1021.0,380.8 1025.3,399.7 1024.2,424.0 C1023.2,448.3 1018.8,478.0 1014.5,505.0 C1010.2,532.0 1001.0,572.5 998.3,586.0" fill="none" stroke="#2e1c16" stroke-width="30" stroke-linecap="round" opacity="0.5" filter="url(#bl6)"/>
<path d="M1040.0,560.0 C1041.7,573.3 1044.2,613.3 1050.0,640.0 C1055.8,666.7 1065.0,695.0 1075.0,720.0 C1085.0,745.0 1104.2,778.3 1110.0,790.0" fill="none" stroke="#3c2a22" stroke-width="16" stroke-linecap="round" opacity="0.55" filter="url(#bl6)"/>
<path d="M1080.0,600.0 C1080.8,613.3 1078.3,655.0 1085.0,680.0 C1091.7,705.0 1109.2,730.0 1120.0,750.0 C1130.8,770.0 1145.0,791.7 1150.0,800.0" fill="none" stroke="#30201a" stroke-width="10" stroke-linecap="round" opacity="0.5" filter="url(#bl6)"/>
<path d="M1400.0,560.0 C1405.0,575.0 1418.3,623.3 1430.0,650.0 C1441.7,676.7 1460.0,695.0 1470.0,720.0 C1480.0,745.0 1488.3,775.0 1490.0,800.0 C1491.7,825.0 1481.7,858.3 1480.0,870.0" fill="none" stroke="#3a2820" stroke-width="20" stroke-linecap="round" opacity="0.55" filter="url(#bl6)"/>
<path d="M1370.0,640.0 C1375.0,653.3 1386.7,696.7 1400.0,720.0 C1413.3,743.3 1438.3,758.3 1450.0,780.0 C1461.7,801.7 1466.7,838.3 1470.0,850.0" fill="none" stroke="#33221c" stroke-width="12" stroke-linecap="round" opacity="0.5" filter="url(#bl6)"/>
</g>
<path id="chest" d="M1124.3,577.8 C1123.0,582.9 1117.8,598.1 1116.2,608.6 C1114.6,619.1 1113.8,630.2 1114.6,641.0 C1115.4,651.8 1118.0,663.9 1121.0,673.4 C1124.0,682.9 1127.8,689.6 1132.4,697.7 C1137.0,705.8 1142.7,713.9 1148.6,722.0 C1154.5,730.1 1162.6,738.7 1168.0,746.3 C1173.4,753.9 1177.6,760.6 1181.0,767.4 C1184.4,774.1 1186.7,780.6 1188.3,786.8 C1189.9,793.0 1190.1,785.7 1190.7,804.6 C1191.3,823.5 1191.8,884.1 1192.0,900.0 L1340.0,900.0 L1331.7,804.6 L1330.0,786.8 L1325.2,762.5 L1315.5,738.2 L1302.5,713.9 L1297.6,697.7 L1299.3,673.4 L1302.5,644.2 L1310.6,628.0 L1326.8,616.7 L1352.7,602.0 L1359.2,584.3 L1362.4,560.0Z" fill="#b5672a"/>
<clipPath id="chestc"><path d="M1124.3,577.8 C1123.0,582.9 1117.8,598.1 1116.2,608.6 C1114.6,619.1 1113.8,630.2 1114.6,641.0 C1115.4,651.8 1118.0,663.9 1121.0,673.4 C1124.0,682.9 1127.8,689.6 1132.4,697.7 C1137.0,705.8 1142.7,713.9 1148.6,722.0 C1154.5,730.1 1162.6,738.7 1168.0,746.3 C1173.4,753.9 1177.6,760.6 1181.0,767.4 C1184.4,774.1 1186.7,780.6 1188.3,786.8 C1189.9,793.0 1190.1,785.7 1190.7,804.6 C1191.3,823.5 1191.8,884.1 1192.0,900.0 L1340.0,900.0 L1331.7,804.6 L1330.0,786.8 L1325.2,762.5 L1315.5,738.2 L1302.5,713.9 L1297.6,697.7 L1299.3,673.4 L1302.5,644.2 L1310.6,628.0 L1326.8,616.7 L1352.7,602.0 L1359.2,584.3 L1362.4,560.0Z"/></clipPath>
<g clip-path="url(#chestc)">
<ellipse cx="1225" cy="660" rx="75" ry="28" fill="#6a2f0c" opacity=".95" filter="url(#bl12)"/>
<ellipse cx="1150" cy="650" rx="30" ry="50" fill="#a85a22" opacity=".8" filter="url(#bl12)"/>
<ellipse cx="1225" cy="700" rx="60" ry="14" fill="#9c501e" opacity=".8" filter="url(#bl6)"/>
<ellipse cx="1285" cy="690" rx="30" ry="50" fill="#6a2f0c" opacity=".7" filter="url(#bl12)"/>
<path d="M1140.5,709.0 C1145.9,711.5 1160.7,719.6 1172.9,723.6 C1185.0,727.7 1201.2,732.3 1213.4,733.3 C1225.5,734.4 1233.6,732.5 1245.8,730.1 C1257.9,727.7 1276.8,722.3 1286.3,718.8 C1295.7,715.2 1299.8,710.7 1302.5,709.0" fill="none" stroke="#7a3a12" stroke-width="3" opacity=".9"/>
<path d="M1140.5,709.0 C1145.9,711.5 1160.7,719.6 1172.9,723.6 C1185.0,727.7 1201.2,732.3 1213.4,733.3 C1225.5,734.4 1233.6,732.5 1245.8,730.1 C1257.9,727.7 1276.8,722.3 1286.3,718.8 C1295.7,715.2 1299.8,710.7 1302.5,709.0" fill="none" stroke="#c97b36" stroke-width="5" opacity=".5" transform="translate(0,-6)"/>
<ellipse cx="1322" cy="770" rx="22" ry="70" fill="#8a4416" opacity=".7" filter="url(#bl6)"/>
</g>
<path d="M1121.1,569.7 C1121.6,571.1 1119.7,572.4 1124.3,577.8 C1128.9,583.2 1140.5,593.7 1148.6,602.1 C1156.7,610.5 1162.1,622.5 1172.9,628.0 C1183.7,633.6 1201.2,634.0 1213.4,635.3 C1225.5,636.7 1236.3,636.8 1245.8,636.1 C1255.2,635.5 1260.6,632.9 1270.1,631.3 C1279.5,629.7 1293.0,629.1 1302.5,626.4 C1311.9,623.7 1318.4,619.1 1326.8,615.1 C1335.2,611.0 1347.3,607.2 1352.7,602.1 C1358.1,597.0 1357.6,591.3 1359.2,584.3 C1360.8,577.3 1361.9,564.0 1362.4,560.0 L1362,540 L1128,540Z" fill="#6e4834"/>
<clipPath id="neckc"><path d="M1121.1,569.7 C1121.6,571.1 1119.7,572.4 1124.3,577.8 C1128.9,583.2 1140.5,593.7 1148.6,602.1 C1156.7,610.5 1162.1,622.5 1172.9,628.0 C1183.7,633.6 1201.2,634.0 1213.4,635.3 C1225.5,636.7 1236.3,636.8 1245.8,636.1 C1255.2,635.5 1260.6,632.9 1270.1,631.3 C1279.5,629.7 1293.0,629.1 1302.5,626.4 C1311.9,623.7 1318.4,619.1 1326.8,615.1 C1335.2,611.0 1347.3,607.2 1352.7,602.1 C1358.1,597.0 1357.6,591.3 1359.2,584.3 C1360.8,577.3 1361.9,564.0 1362.4,560.0 L1362,540 L1128,540Z"/></clipPath>
<g clip-path="url(#neckc)"><ellipse cx="1262" cy="632" rx="50" ry="9" fill="#160806" filter="url(#bl3)"/><ellipse cx="1310" cy="595" rx="50" ry="30" fill="#946846" filter="url(#bl12)"/></g>
<path d="M1121.4,493.6 C1119.3,502.7 1115.5,496.5 1108.5,494.6 C1101.4,492.7 1087.9,488.7 1079.3,482.3 C1070.7,475.9 1062.3,466.1 1056.6,456.4 C1051.0,446.6 1047.0,435.8 1045.3,424.0 C1043.6,412.1 1044.4,392.5 1046.3,385.1 C1048.2,377.6 1052.2,379.0 1056.6,379.3 C1061.1,379.5 1068.5,382.0 1072.8,386.7 C1077.1,391.5 1077.7,401.6 1082.5,407.8 C1087.4,414.0 1095.5,418.6 1102.0,424.0 C1108.5,429.4 1118.2,428.6 1121.4,440.2 C1124.7,451.8 1123.6,484.6 1121.4,493.6Z" fill="#a27654"/>
<clipPath id="earc"><path d="M1121.4,493.6 C1119.3,502.7 1115.5,496.5 1108.5,494.6 C1101.4,492.7 1087.9,488.7 1079.3,482.3 C1070.7,475.9 1062.3,466.1 1056.6,456.4 C1051.0,446.6 1047.0,435.8 1045.3,424.0 C1043.6,412.1 1044.4,392.5 1046.3,385.1 C1048.2,377.6 1052.2,379.0 1056.6,379.3 C1061.1,379.5 1068.5,382.0 1072.8,386.7 C1077.1,391.5 1077.7,401.6 1082.5,407.8 C1087.4,414.0 1095.5,418.6 1102.0,424.0 C1108.5,429.4 1118.2,428.6 1121.4,440.2 C1124.7,451.8 1123.6,484.6 1121.4,493.6Z"/></clipPath>
<g clip-path="url(#earc)"><ellipse cx="1078" cy="440" rx="14" ry="32" fill="#c79a76" filter="url(#bl6)" transform="rotate(-18 1078 440)"/><ellipse cx="1100" cy="455" rx="14" ry="30" fill="#6e452e" filter="url(#bl6)" transform="rotate(-25 1100 455)"/></g>
<path d="M1278.0,161.0 C1290.9,164.3 1305.4,171.8 1317.0,181.0 C1328.6,190.2 1339.4,203.2 1347.8,216.0 C1356.2,228.8 1362.1,245.5 1367.6,258.0 C1373.1,270.5 1377.4,282.2 1380.6,291.0 C1383.8,299.8 1385.7,302.5 1387.0,310.6 C1388.3,318.7 1388.2,328.9 1388.7,339.7 C1389.2,350.5 1389.9,364.0 1390.3,375.4 C1390.7,386.8 1391.3,397.0 1391.0,407.8 C1390.7,418.6 1389.5,430.3 1388.7,440.0 C1387.9,449.7 1387.5,457.9 1386.4,466.0 C1385.3,474.1 1384.0,480.7 1382.2,488.8 C1380.4,496.9 1378.1,505.5 1375.7,514.7 C1373.3,523.9 1370.0,535.2 1367.6,543.8 C1365.2,552.4 1362.8,560.5 1361.2,566.5 C1359.6,572.5 1359.7,574.4 1357.8,580.0 C1355.9,585.6 1350.8,596.3 1350.0,600.0 C1349.2,603.7 1356.6,599.5 1352.7,602.1 C1348.8,604.8 1335.2,612.0 1326.8,615.9 C1318.4,619.8 1311.9,623.3 1302.5,625.6 C1293.0,627.9 1279.5,628.7 1270.1,629.7 C1260.6,630.6 1255.2,632.1 1245.8,631.3 C1236.3,630.5 1225.5,628.6 1213.4,624.8 C1201.2,621.0 1183.7,614.8 1172.9,608.6 C1162.1,602.4 1155.3,594.6 1148.6,587.5 C1141.8,580.5 1136.0,574.4 1132.4,566.5 C1128.8,558.6 1128.2,550.2 1127.0,540.0 C1125.8,529.8 1125.9,515.0 1125.0,505.0 C1124.1,495.0 1123.4,490.8 1121.4,480.0 C1119.4,469.2 1114.6,449.3 1113.0,440.0 C1111.4,430.7 1111.1,431.0 1111.7,424.0 C1112.3,417.0 1114.2,406.1 1116.6,398.0 C1119.0,389.9 1122.8,382.9 1126.3,375.4 C1129.8,367.8 1134.1,360.8 1137.6,352.7 C1141.1,344.6 1144.4,335.4 1147.3,326.8 C1150.2,318.2 1152.9,310.6 1155.0,300.9 C1157.1,291.2 1158.2,280.1 1160.0,268.5 C1161.8,256.9 1162.4,242.3 1166.0,231.0 C1169.6,219.7 1175.2,209.6 1181.7,200.6 C1188.2,191.6 1195.3,183.6 1205.0,177.0 C1214.7,170.4 1227.5,163.7 1239.7,161.0 C1251.9,158.3 1265.1,157.7 1278.0,161.0Z" fill="url(#faceg)"/>
<clipPath id="facec"><path d="M1278.0,161.0 C1290.9,164.3 1305.4,171.8 1317.0,181.0 C1328.6,190.2 1339.4,203.2 1347.8,216.0 C1356.2,228.8 1362.1,245.5 1367.6,258.0 C1373.1,270.5 1377.4,282.2 1380.6,291.0 C1383.8,299.8 1385.7,302.5 1387.0,310.6 C1388.3,318.7 1388.2,328.9 1388.7,339.7 C1389.2,350.5 1389.9,364.0 1390.3,375.4 C1390.7,386.8 1391.3,397.0 1391.0,407.8 C1390.7,418.6 1389.5,430.3 1388.7,440.0 C1387.9,449.7 1387.5,457.9 1386.4,466.0 C1385.3,474.1 1384.0,480.7 1382.2,488.8 C1380.4,496.9 1378.1,505.5 1375.7,514.7 C1373.3,523.9 1370.0,535.2 1367.6,543.8 C1365.2,552.4 1362.8,560.5 1361.2,566.5 C1359.6,572.5 1359.7,574.4 1357.8,580.0 C1355.9,585.6 1350.8,596.3 1350.0,600.0 C1349.2,603.7 1356.6,599.5 1352.7,602.1 C1348.8,604.8 1335.2,612.0 1326.8,615.9 C1318.4,619.8 1311.9,623.3 1302.5,625.6 C1293.0,627.9 1279.5,628.7 1270.1,629.7 C1260.6,630.6 1255.2,632.1 1245.8,631.3 C1236.3,630.5 1225.5,628.6 1213.4,624.8 C1201.2,621.0 1183.7,614.8 1172.9,608.6 C1162.1,602.4 1155.3,594.6 1148.6,587.5 C1141.8,580.5 1136.0,574.4 1132.4,566.5 C1128.8,558.6 1128.2,550.2 1127.0,540.0 C1125.8,529.8 1125.9,515.0 1125.0,505.0 C1124.1,495.0 1123.4,490.8 1121.4,480.0 C1119.4,469.2 1114.6,449.3 1113.0,440.0 C1111.4,430.7 1111.1,431.0 1111.7,424.0 C1112.3,417.0 1114.2,406.1 1116.6,398.0 C1119.0,389.9 1122.8,382.9 1126.3,375.4 C1129.8,367.8 1134.1,360.8 1137.6,352.7 C1141.1,344.6 1144.4,335.4 1147.3,326.8 C1150.2,318.2 1152.9,310.6 1155.0,300.9 C1157.1,291.2 1158.2,280.1 1160.0,268.5 C1161.8,256.9 1162.4,242.3 1166.0,231.0 C1169.6,219.7 1175.2,209.6 1181.7,200.6 C1188.2,191.6 1195.3,183.6 1205.0,177.0 C1214.7,170.4 1227.5,163.7 1239.7,161.0 C1251.9,158.3 1265.1,157.7 1278.0,161.0Z"/></clipPath>
<g clip-path="url(#facec)">
<ellipse cx="1150" cy="520" rx="55" ry="110" fill="#7c5038" opacity=".7" filter="url(#bl20)"/>
<ellipse cx="1215" cy="615" rx="120" ry="34" fill="#6e4530" opacity=".75" filter="url(#bl20)"/>
<ellipse cx="1180" cy="330" rx="30" ry="120" fill="#8a5a40" opacity=".6" filter="url(#bl20)" transform="rotate(20 1180 330)"/>
<ellipse cx="1280" cy="260" rx="70" ry="60" fill="#c09877" opacity=".7" filter="url(#bl20)"/>
<ellipse cx="1275" cy="440" rx="55" ry="45" fill="#b88e6c" opacity=".7" filter="url(#bl20)"/>
<ellipse cx="1392" cy="400" rx="16" ry="120" fill="#6a4030" opacity=".7" filter="url(#bl12)"/>
<ellipse cx="1318" cy="585" rx="34" ry="24" fill="#a87a58" opacity=".9" filter="url(#bl12)"/>
<path d="M1186.0,363.0 C1189.3,358.9 1197.5,345.5 1205.6,338.5 C1213.7,331.5 1225.0,325.1 1234.7,321.0 C1244.4,316.9 1254.3,314.8 1264.0,314.0 C1273.7,313.2 1285.8,314.3 1293.0,316.0 C1300.2,317.7 1304.7,322.7 1307.0,324.0" fill="none" stroke="#35201a" stroke-width="12" stroke-linecap="round" opacity=".9" filter="url(#bl3)"/>
<path d="M1332.0,338.0 C1333.6,334.8 1336.9,324.1 1341.7,319.0 C1346.5,313.9 1353.8,309.8 1361.0,307.5 C1368.2,305.2 1381.0,305.4 1385.0,305.0" fill="none" stroke="#35201a" stroke-width="10" stroke-linecap="round" opacity=".9" filter="url(#bl3)"/>
<ellipse cx="1252" cy="366" rx="40" ry="16" fill="#7a5038" opacity=".55" filter="url(#bl6)"/>
<ellipse cx="1362" cy="358" rx="28" ry="14" fill="#7a5038" opacity=".55" filter="url(#bl6)"/>
<path d="M1215.4,373.8 C1215.9,370.2 1225.6,363.8 1231.6,360.8 C1237.5,357.8 1244.5,356.2 1251.0,355.9 C1257.5,355.7 1265.3,357.3 1270.4,359.2 C1275.6,361.1 1282.3,364.0 1281.8,367.3 C1281.2,370.5 1272.9,375.6 1267.2,378.6 C1261.5,381.6 1254.3,384.6 1247.8,385.1 C1241.3,385.6 1233.7,383.7 1228.3,381.9 C1222.9,380.0 1214.8,377.3 1215.4,373.8Z" fill="#a8785c" filter="url(#bl3)"/>
<path d="M1215.4,373.8 C1218.1,371.6 1225.6,363.8 1231.6,360.8 C1237.5,357.8 1244.5,356.2 1251.0,355.9 C1257.5,355.7 1265.3,357.3 1270.4,359.2 C1275.6,361.1 1279.9,365.9 1281.8,367.3" fill="none" stroke="#2a1610" stroke-width="4" filter="url(#bl3)"/>
<ellipse cx="1252.6" cy="369.5" rx="11" ry="9.500" fill="#1e0e0a" filter="url(#bl3)"/>
<path d="M1337.8,359.2 C1337.3,355.7 1343.8,352.7 1348.2,351.1 C1352.6,349.5 1359.0,348.6 1364.4,349.5 C1369.8,350.3 1377.1,353.5 1380.6,355.9 C1384.1,358.4 1387.1,361.1 1385.5,364.0 C1383.8,367.0 1376.6,372.4 1370.9,373.8 C1365.2,375.1 1357.0,374.6 1351.4,372.1 C1345.9,369.7 1338.4,362.7 1337.8,359.2Z" fill="#a8785c" filter="url(#bl3)"/>
<path d="M1337.8,359.2 C1339.6,357.8 1343.8,352.7 1348.2,351.1 C1352.6,349.5 1359.0,348.6 1364.4,349.5 C1369.8,350.3 1376.9,353.7 1380.6,355.9 C1384.3,358.2 1385.5,361.9 1386.4,363.1" fill="none" stroke="#2a1610" stroke-width="3.500" filter="url(#bl3)"/>
<ellipse cx="1367.0" cy="361.8" rx="10" ry="9" fill="#1e0e0a" filter="url(#bl3)"/>
<ellipse cx="1251.0" cy="393.2" rx="32" ry="7" fill="#8a5a40" opacity=".6" filter="url(#bl6)"/>
<path d="M1333.6,375.4 C1334.7,379.7 1336.9,392.7 1340.1,401.3 C1343.3,409.9 1349.6,420.2 1353.1,427.2 C1356.6,434.2 1360.4,438.0 1361.2,443.4 C1362.0,448.8 1360.6,455.3 1357.9,459.6 C1355.2,463.9 1347.1,467.7 1345.0,469.3" fill="none" stroke="#6a3e2a" stroke-width="5" opacity=".85" filter="url(#bl3)"/>
<ellipse cx="1341.7" cy="440.2" rx="22" ry="20" fill="#cfa07c" opacity=".8" filter="url(#bl6)"/>
<ellipse cx="1323.9" cy="467.7" rx="26" ry="9" fill="#5a3020" opacity=".8" filter="url(#bl6)"/>
<path d="M1270.4,531.5 C1273.7,530.4 1282.9,527.3 1289.9,525.0 C1296.9,522.8 1304.5,520.3 1312.6,517.9 C1320.7,515.5 1330.4,513.0 1338.5,510.8 C1346.6,508.6 1355.5,506.5 1361.2,505.0 C1366.8,503.5 1370.6,502.3 1372.5,501.7" fill="none" stroke="#5a2c24" stroke-width="9" stroke-linecap="round" filter="url(#bl3)"/>
<path d="M1276.9,534.1 C1278.5,532.0 1293.1,534.7 1302.8,532.5 C1312.6,530.3 1325.0,524.9 1335.2,521.2 C1345.5,517.4 1360.1,507.7 1364.4,509.8 C1368.7,512.0 1365.5,527.1 1361.2,534.1 C1356.8,541.1 1346.6,548.7 1338.5,551.9 C1330.4,555.2 1320.1,554.6 1312.6,553.6 C1305.0,552.5 1299.1,548.7 1293.1,545.5 C1287.2,542.2 1275.3,536.3 1276.9,534.1Z" fill="#a06a5c" opacity=".95" filter="url(#bl3)"/>
<ellipse cx="1335.2" cy="542.2" rx="22" ry="7" fill="#c8988a" opacity=".8" filter="url(#bl3)" transform="rotate(-14 1335 548)"/>
<ellipse cx="1319.0" cy="566.5" rx="40" ry="9" fill="#6a3e2c" opacity=".7" filter="url(#bl6)" transform="rotate(-10 1310 570)"/>
<circle cx="1212.1" cy="410.4" r="3" fill="#3a2016"/>
</g>
<defs><linearGradient id="lowsw" x1="1341" y1="0" x2="1500" y2="0" gradientUnits="userSpaceOnUse">
<stop offset="0" stop-color="#7e3b11"/><stop offset="0.3" stop-color="#74350f"/><stop offset="0.62" stop-color="#58280c"/><stop offset="0.85" stop-color="#5e2b0d"/><stop offset="1" stop-color="#4a200a"/></linearGradient>
<linearGradient id="armg" x1="1450" y1="0" x2="1515" y2="0" gradientUnits="userSpaceOnUse">
<stop offset="0" stop-color="#6a3c26"/><stop offset="0.6" stop-color="#6e402a"/><stop offset="1" stop-color="#2e1810"/></linearGradient></defs>
<path d="M1335,1265 L1516,1265 L1514.2,1274 L1510.3,1297.3 L1508,1322 L1505,1353 L1503.4,1376.6 L1506,1401 L1335,1401Z" fill="url(#lowsw)"/>
<path d="M1446.600,1265 L1516,1265 L1514.200,1274 L1510.300,1297.300 L1508,1322 L1505,1353 L1503.400,1376.600 L1504,1392 L1493.200,1368.800 L1477.700,1337.700 L1462,1306.600Z" fill="url(#armg)"/>
<defs>
<linearGradient id="gg" x1="0" y1="0" x2="1" y2="0"><stop offset="0" stop-color="#3fae1c"/><stop offset=".5" stop-color="#6ff23a"/><stop offset="1" stop-color="#2f9014"/></linearGradient>
<linearGradient id="gr" x1="0" y1="0" x2="0" y2="1"><stop offset="0" stop-color="#8a0f0a"/><stop offset=".45" stop-color="#f0231a"/><stop offset="1" stop-color="#7a0c08"/></linearGradient>
<linearGradient id="gy1" x1="0" y1="0" x2="0" y2="1"><stop offset="0" stop-color="#8c8c8c"/><stop offset=".45" stop-color="#e6e6e6"/><stop offset="1" stop-color="#7c7c7c"/></linearGradient>
<linearGradient id="gy2" x1="0" y1="0" x2="1" y2="0"><stop offset="0" stop-color="#8c8c8c"/><stop offset=".45" stop-color="#e6e6e6"/><stop offset="1" stop-color="#7c7c7c"/></linearGradient>
</defs>
<path d="M1988,136.500 Q1998,133 2008,136.500 L1998.500,166.500Z" fill="url(#gg)"/>
<path d="M1953,172 Q1950,181 1953,191 L1985,181Z" fill="url(#gr)"/>
<path d="M2040.500,171 Q2043.500,180 2040.500,189.500 L2011.500,180.700Z" fill="url(#gy1)"/>
<path d="M1989,222 Q1998,226 2007,222 L1998,195Z" fill="url(#gy2)"/>
<rect x="1988.500" y="170.800" width="21.500" height="21.500" fill="#fff"/><path d="M1988.500,171v21" stroke="#3a3a3a" stroke-width="1"/>
<text x="1990" y="130" font-family="Liberation Sans" font-weight="700" font-size="17" fill="#fff">y</text>
<text x="1936" y="186" font-family="Liberation Sans" font-weight="700" font-size="17" fill="#fff">x</text>
<g opacity=".55" fill="none" stroke="#eef2f6" stroke-width="1.600"><rect x="2044.500" y="129.500" width="9" height="7" fill="#eef2f6"/><path d="M2052.500,129.500v-2.500a3.200,3.200 0 0 0-6,-1.500"/></g>
<g opacity=".55"><path d="M1976,247.500 L1961,254.500 L1976,261.500 M1961,254.500 H1976" fill="none" stroke="#eef2f6" stroke-width="1.500"/><text x="1979.500" y="261" font-family="Liberation Sans" font-size="18.500" letter-spacing=".6" fill="#eef2f6">Persp</text></g></svg>
<div class="a" style="left:2076px;top:44px;width:951px;height:1919px;background:#383838;"></div>
<div class="a" style="left:2076px;top:44px;width:951px;height:29px;background:#282828;border-radius:0 5px 0 0;"></div>
<div class="a" style="left:2076px;top:44px;width:143px;height:29px;background:#3c3c3c;border-radius:0 4px 0 0;"></div>
<div class="a" style="left:2077px;top:73px;width:950px;height:1.5px;background:#1f1f1f;"></div>
<svg style="left:2089px;top:52px;" width="15" height="15" viewBox="0 0 15 15"><circle cx="7.500" cy="7.500" r="7.500" fill="#c4c4c4"/><rect x="6.200" y="6.300" width="2.600" height="5.700" fill="#3c3c3c"/><circle cx="7.500" cy="3.600" r="1.500" fill="#3c3c3c"/></svg>
<div class="t " style="left:2112px;top:47.5px;color:#d4d4d4">Inspector</div>
<svg style="left:2231px;top:50px;" width="19" height="19" viewBox="0 0 19 19"><path fill="#c4c4c4" fill-rule="evenodd" d="M8 0h3l.5 2.400 1.600.7 2.100-1.400 2.100 2.100-1.400 2.100.7 1.600L19 8v3l-2.400.5-.7 1.600 1.400 2.100-2.100 2.100-2.100-1.400-1.600.7L11 19H8l-.5-2.400-1.600-.7-2.100 1.400-2.100-2.100 1.400-2.100-.7-1.600L0 11V8l2.400-.5.700-1.600-1.400-2.100 2.100-2.100 2.100 1.400 1.600-.7zM9.500 6a3.500 3.500 0 1 0 0 7 3.500 3.500 0 0 0 0-7z"/></svg>
<div class="t " style="left:2256px;top:47.5px;color:#d4d4d4">Project Settings</div>
<div class="t " style="left:2432px;top:47.5px;color:#d4d4d4;letter-spacing:.3px">Render Pipeline Wizard</div>
<svg style="left:2973px;top:49px;" width="14" height="17" viewBox="0 0 14 17"><g fill="none" stroke="#c4c4c4" stroke-width="1.600"><rect x="1" y="8.500" width="11" height="7"/><path d="M10.500 8.500V5.500a3.300 3.300 0 0 0-6-1.800"/></g></svg>
<svg style="left:3004.5px;top:50px;" width="4" height="16" viewBox="0 0 4 16"><g fill="#c4c4c4"><rect x="0" y="0" width="3.600" height="3.600" rx="1.200"/><rect x="0" y="6" width="3.600" height="3.600" rx="1.200"/><rect x="0" y="12" width="3.600" height="3.600" rx="1.200"/></g></svg>
<div class="a" style="left:2076px;top:74.5px;width:951px;height:78.5px;background:#3c3c3c;"></div>
<svg style="left:2092px;top:91px;" width="36" height="30" viewBox="0 0 36 30"><path fill="#c6c6c6" d="M0 3.500A3 3 0 0 1 3 .500h11.500L18.500 6h14.500a3 3 0 0 1 3 3v18a3 3 0 0 1-3 3H3a3 3 0 0 1-3-3z"/></svg>
<div class="t " style="left:2146px;top:82px;color:#a8a8a8;font-size:19.500px;letter-spacing:1.100px">Materials (Default Asset)</div>
<svg style="left:3013.5px;top:85px;" width="4" height="16" viewBox="0 0 4 16"><g fill="#c4c4c4"><rect x="0" y="0" width="3.600" height="3.600" rx="1.200"/><rect x="0" y="6" width="3.600" height="3.600" rx="1.200"/><rect x="0" y="12" width="3.600" height="3.600" rx="1.200"/></g></svg>
<div class="a" style="left:2952px;top:116px;width:67px;height:25px;background:#585858;border:1px solid #303030;border-radius:4px;"></div>
<div class="t " style="left:2963px;top:116.5px;color:#e0e0e0">Open</div>
<div class="a" style="left:2076px;top:1855px;width:951px;height:1.5px;background:#1f1f1f;"></div>
<div class="t b" style="left:2087px;top:1859.5px;color:#c4c4c4;letter-spacing:.9px">Asset Labels</div>
<div class="a" style="left:2076px;top:1886px;width:951px;height:1.5px;background:#1f1f1f;"></div>
<svg style="left:2991px;top:1893px;" width="30" height="22" viewBox="0 0 30 22"><rect x="0" y="0" width="30" height="22" rx="11" fill="#1f4a8a"/><path fill="#fff" d="M8 5.500h6.500l8 8-5.500 5.500-9-9z"/><circle cx="11.300" cy="8.800" r="1.400" fill="#1f4a8a"/></svg>
<div class="t " style="left:2083px;top:1930px;color:#c4c4c4">AssetBundle</div>
<div class="a" style="left:2220px;top:1930px;width:613px;height:24.5px;background:#515151;border:1px solid #303030;border-radius:4px;"></div>
<div class="t " style="left:2225px;top:1930px;color:#e0e0e0">None</div>
<svg style="left:2813px;top:1938.5px;" width="12" height="8" viewBox="0 0 12 8"><path d="M0 0h11L5.500 6.500z" fill="#c4c4c4"/></svg>
<div class="a" style="left:2843px;top:1930px;width:180px;height:24.5px;background:#515151;border:1px solid #303030;border-radius:4px;"></div>
<div class="t " style="left:2848px;top:1930px;color:#e0e0e0">None</div>
<svg style="left:3001px;top:1938.5px;" width="12" height="8" viewBox="0 0 12 8"><path d="M0 0h11L5.500 6.500z" fill="#c4c4c4"/></svg>
<div class="a" style="left:0px;top:1404px;width:2073px;height:559px;background:#333333;"></div>
<div class="a" style="left:0px;top:1404px;width:2073px;height:29px;background:#282828;border-radius:0 5px 0 0;"></div>
<div class="a" style="left:0px;top:1404px;width:119px;height:29px;background:#3c3c3c;border-radius:0 4px 0 0;"></div>
<div class="a" style="left:0px;top:1404px;width:119px;height:2.5px;background:#3a79bb;"></div>
<svg style="left:8px;top:1412px;" width="18" height="15" viewBox="0 0 18 15"><path fill="#c4c4c4" d="M0 1.500A1.500 1.500 0 0 1 1.500 0h5.800L9.500 2.800h7a1.500 1.500 0 0 1 1.500 1.500V13.500a1.500 1.500 0 0 1-1.500 1.500h-15A1.500 1.500 0 0 1 0 13.500z"/></svg>
<div class="t " style="left:32px;top:1408px;color:#d4d4d4;letter-spacing:.7px">Project</div>
<svg style="left:135px;top:1411px;" width="15" height="16" viewBox="0 0 15 16"><path fill="#c4c4c4" d="M0 0h15v16H0zM2.500 3v1.800h10V3zM2.500 7v1.800h10V7zM2.500 11v1.800h6V11z" fill-rule="evenodd"/></svg>
<div class="t " style="left:157px;top:1408px;color:#d4d4d4;letter-spacing:.7px">Console</div>
<svg style="left:268px;top:1412px;" width="17" height="15" viewBox="0 0 17 15"><rect x="0" y="0" width="17" height="3.500" fill="#c4c4c4"/><path fill="#c4c4c4" fill-rule="evenodd" d="M1.200 5h14.600v10H1.200zM5.500 7v2.200h6V7z"/></svg>
<div class="t " style="left:292px;top:1408px;color:#d4d4d4;letter-spacing:.7px">Package Manager</div>
<svg style="left:2021px;top:1409px;" width="14" height="17" viewBox="0 0 14 17"><g fill="none" stroke="#c4c4c4" stroke-width="1.600"><rect x="1" y="8.500" width="11" height="7"/><path d="M10.500 8.500V5.500a3.300 3.300 0 0 0-6-1.800"/></g></svg>
<svg style="left:2052.5px;top:1410px;" width="4" height="16" viewBox="0 0 4 16"><g fill="#c4c4c4"><rect x="0" y="0" width="3.600" height="3.600" rx="1.200"/><rect x="0" y="6" width="3.600" height="3.600" rx="1.200"/><rect x="0" y="12" width="3.600" height="3.600" rx="1.200"/></g></svg>
<div class="a" style="left:0px;top:1433px;width:2073px;height:31px;background:#3c3c3c;"></div>
<svg style="left:8px;top:1440px;" width="17" height="17" viewBox="0 0 17 17"><path d="M8.500 0v17M0 8.500h17" stroke="#c4c4c4" stroke-width="2.200"/></svg>
<svg style="left:33px;top:1445px;" width="11" height="7" viewBox="0 0 11 7"><path d="M0 0h10.500L5.200 6.500z" fill="#c4c4c4"/></svg>
<div class="a" style="left:1441px;top:1436px;width:450px;height:24px;background:#2a2a2a;border:1px solid #1e1e1e;border-radius:5px;"></div>
<svg style="left:1449px;top:1442px;" width="11" height="12" viewBox="0 0 11 12"><circle cx="4.200" cy="4.200" r="3.200" fill="none" stroke="#b4b4b4" stroke-width="1.600"/><path d="M6.500 6.500L10.500 10.500" stroke="#b4b4b4" stroke-width="1.900"/></svg>
<div class="a" style="left:1894px;top:1434px;width:1.5px;height:29px;background:#2a2a2a;"></div>
<div class="a" style="left:1933px;top:1434px;width:1.5px;height:29px;background:#2a2a2a;"></div>
<div class="a" style="left:1972px;top:1434px;width:1.5px;height:29px;background:#2a2a2a;"></div>
<div class="a" style="left:2012px;top:1434px;width:1.5px;height:29px;background:#2a2a2a;"></div>
<svg style="left:1903px;top:1437px;" width="20" height="21" viewBox="0 0 20 21"><rect x="2" y="0" width="8.500" height="8.500" fill="#c4c4c4"/><path d="M14.500 6l5 9.500h-10z" fill="#c4c4c4"/><circle cx="5.500" cy="15" r="5.500" fill="#c4c4c4"/></svg>
<svg style="left:1943px;top:1440px;" width="17" height="17" viewBox="0 0 17 17"><path fill="#c4c4c4" d="M8.500 0H16v7.500l-8.500 8.500L0 8.500z"/><circle cx="12.500" cy="3.500" r="1.500" fill="#3c3c3c"/></svg>
<svg style="left:1982px;top:1439px;" width="19" height="18" viewBox="0 0 19 18"><path fill="#8a8a8a" d="M9.500 0l2.900 6.200 6.600.8-4.900 4.500 1.300 6.500-5.900-3.300L3.600 18l1.300-6.500L0 7l6.600-.8z"/></svg>
<svg style="left:2022px;top:1439px;" width="22" height="19" viewBox="0 0 22 19"><path d="M1 9.500C4 4.500 8 3 10.500 3s6.500 1.500 9.500 6.500c-3 5-7 6.500-9.500 6.500S4 14.500 1 9.500z" fill="none" stroke="#c4c4c4" stroke-width="1.600"/><path d="M2.500 17L18.500 1.500" stroke="#c4c4c4" stroke-width="1.700"/><path d="M10.500 6a3.500 3.500 0 0 0-3 5.500z" fill="#c4c4c4"/></svg>
<div class="t " style="left:2046px;top:1436.5px;color:#d0d0d0;letter-spacing:0;font-size:19px">15</div>
<div class="a" style="left:0px;top:1464px;width:437px;height:499px;background:#383838;"></div>
<div class="a" style="left:437px;top:1464px;width:19px;height:499px;background:#353535;"></div>
<div class="a" style="left:456px;top:1464px;width:1.5px;height:499px;background:#232323;"></div>
<div class="a" style="left:439.5px;top:1488px;width:15.5px;height:403px;background:#5f5f5f;border-radius:8px;"></div>
<svg style="left:440.5px;top:1472px;" width="14" height="8" viewBox="0 0 14 8"><path d="M0 7.500h13L6.500 0z" fill="#c4c4c4"/></svg>
<svg style="left:440.5px;top:1944px;" width="14" height="8" viewBox="0 0 14 8"><path d="M0 0h13L6.500 7.500z" fill="#c4c4c4"/></svg>
<div class="a" style="left:457.5px;top:1464px;width:1615.5px;height:31px;background:#404040;"></div>
<div class="a" style="left:457.5px;top:1495px;width:1615.5px;height:1.5px;background:#2a2a2a;"></div>
<div class="t " style="left:464px;top:1467.5px;color:#bdbdbd;letter-spacing:.7px">Assets</div>
<svg style="left:530px;top:1473px;" width="9" height="14" viewBox="0 0 9 14"><path d="M1.500 1l6 6-6 6" fill="none" stroke="#8f8f8f" stroke-width="1.800"/></svg>
<div class="t b" style="left:547px;top:1467.5px;color:#d4d4d4;letter-spacing:.7px">Materials</div>
<div class="t " style="left:1300px;top:1515px;color:#6a6a6a;left:auto;right:1677px">This folder is empty</div>
<div class="a" style="left:457.5px;top:1931px;width:1615.5px;height:1.5px;background:#232323;"></div>
<div class="a" style="left:457.5px;top:1932.5px;width:1615.5px;height:30.5px;background:#404040;"></div>
<svg style="left:465px;top:1937px;" width="18" height="15" viewBox="0 0 18 15"><path fill="#c4c4c4" d="M0 1.500A1.500 1.500 0 0 1 1.500 0h5.800L9.500 2.800h7a1.500 1.500 0 0 1 1.500 1.500V13.500a1.500 1.500 0 0 1-1.500 1.500h-15A1.500 1.500 0 0 1 0 13.500z"/></svg>
<div class="t " style="left:487px;top:1933.5px;color:#d4d4d4;letter-spacing:.7px">Assets/Materials</div>
<div class="a" style="left:1974px;top:1944px;width:75px;height:2.5px;background:#5e5e5e;"></div>
<div class="a" style="left:1967px;top:1937.5px;width:15px;height:15px;background:#a0a0a0;border-radius:8px;"></div>
<svg style="left:4px;top:1469.0px;" width="13" height="12" viewBox="0 0 13 12"><path d="M0 0h12.500L6.200 11.500z" fill="#717171"/></svg>
<svg style="left:25px;top:1465.5px;" width="19" height="18" viewBox="0 0 19 18"><path fill="#f3b61f" d="M9.500 0l2.900 6.200 6.600.8-4.900 4.500 1.300 6.500-5.900-3.300L3.600 18l1.300-6.500L0 7l6.600-.8z"/></svg>
<div class="t b" style="left:50px;top:1462.5px;color:#c9c9c9;letter-spacing:.75px">Favorites</div>
<svg style="left:46px;top:1490.5px;" width="17" height="17" viewBox="0 0 17 17"><circle cx="6.500" cy="6.500" r="5.500" fill="none" stroke="#c4c4c4" stroke-width="1.600"/><path d="M10.500 10.500L16 16" stroke="#c4c4c4" stroke-width="2.400"/></svg>
<div class="t " style="left:70px;top:1486.5px;color:#c9c9c9;letter-spacing:.45px">All Materials</div>
<svg style="left:46px;top:1514.5px;" width="17" height="17" viewBox="0 0 17 17"><circle cx="6.500" cy="6.500" r="5.500" fill="none" stroke="#c4c4c4" stroke-width="1.600"/><path d="M10.500 10.500L16 16" stroke="#c4c4c4" stroke-width="2.400"/></svg>
<div class="t " style="left:70px;top:1510.5px;color:#c9c9c9;letter-spacing:.45px">All Models</div>
<svg style="left:46px;top:1538.5px;" width="17" height="17" viewBox="0 0 17 17"><circle cx="6.500" cy="6.500" r="5.500" fill="none" stroke="#c4c4c4" stroke-width="1.600"/><path d="M10.500 10.500L16 16" stroke="#c4c4c4" stroke-width="2.400"/></svg>
<div class="t " style="left:70px;top:1534.5px;color:#c9c9c9;letter-spacing:.45px">All Prefabs</div>
<svg style="left:4px;top:1588.0px;" width="13" height="12" viewBox="0 0 13 12"><path d="M0 0h12.500L6.200 11.500z" fill="#717171"/></svg>
<svg style="left:25px;top:1586.0px;" width="21" height="15" viewBox="0 0 21 15"><path fill="#c4c4c4" d="M0 1.500A1.500 1.500 0 0 1 1.500 0h5L8.500 2.300h6.500a1.200 1.200 0 0 1 1.200 1.200V5H5L1.500 13 0 13.500z"/><path fill="#c4c4c4" d="M5.800 6.200h14.700L16.500 15H1.800z"/></svg>
<div class="t b" style="left:50px;top:1581.5px;color:#c9c9c9;letter-spacing:.75px">Assets</div>
<svg style="left:45px;top:1610.5px;" width="18" height="15" viewBox="0 0 18 15"><path fill="#c4c4c4" d="M0 1.500A1.500 1.500 0 0 1 1.500 0h5.800L9.500 2.800h7a1.500 1.500 0 0 1 1.500 1.500V13.500a1.500 1.500 0 0 1-1.500 1.500h-15A1.500 1.500 0 0 1 0 13.500z"/></svg>
<div class="t " style="left:70px;top:1605.5px;color:#c9c9c9;letter-spacing:.45px">Clips</div>
<svg style="left:26.5px;top:1635.0px;" width="12" height="13" viewBox="0 0 12 13"><path d="M0 0l11.500 6.500L0 13z" fill="#717171"/></svg>
<svg style="left:45px;top:1634.5px;" width="18" height="15" viewBox="0 0 18 15"><path fill="#c4c4c4" d="M0 1.500A1.500 1.500 0 0 1 1.500 0h5.800L9.500 2.800h7a1.500 1.500 0 0 1 1.500 1.500V13.500a1.500 1.500 0 0 1-1.500 1.500h-15A1.500 1.500 0 0 1 0 13.500z"/></svg>
<div class="t " style="left:70px;top:1629.5px;color:#c9c9c9;letter-spacing:.45px">ExampleAssets</div>
<svg style="left:45px;top:1658.5px;" width="18" height="15" viewBox="0 0 18 15"><path fill="#c4c4c4" d="M0 1.500A1.500 1.500 0 0 1 1.500 0h5.800L9.500 2.800h7a1.500 1.500 0 0 1 1.500 1.500V13.500a1.500 1.500 0 0 1-1.500 1.500h-15A1.500 1.500 0 0 1 0 13.500z"/></svg>
<div class="t " style="left:70px;top:1653.5px;color:#c9c9c9;letter-spacing:.45px">HDRPDefaultResources</div>
<div class="a" style="left:0px;top:1678.5px;width:437px;height:24px;background:#4d4d4d;"></div>
<svg style="left:45px;top:1681.5px;" width="18" height="16" viewBox="0 0 18 16"><path fill="none" stroke="#c4c4c4" stroke-width="1.500" d="M.8 1.800h6L9 4.300h8.200v10H.8z"/></svg>
<div class="t " style="left:70px;top:1677.5px;color:#c9c9c9;letter-spacing:.45px">Materials</div>
<svg style="left:26.5px;top:1707.0px;" width="12" height="13" viewBox="0 0 12 13"><path d="M0 0l11.500 6.500L0 13z" fill="#717171"/></svg>
<svg style="left:45px;top:1706.5px;" width="18" height="15" viewBox="0 0 18 15"><path fill="#c4c4c4" d="M0 1.500A1.500 1.500 0 0 1 1.500 0h5.800L9.500 2.800h7a1.500 1.500 0 0 1 1.500 1.500V13.500a1.500 1.500 0 0 1-1.500 1.500h-15A1.500 1.500 0 0 1 0 13.500z"/></svg>
<div class="t " style="left:70px;top:1701.5px;color:#c9c9c9;letter-spacing:.45px">Presets</div>
<svg style="left:24px;top:1732.0px;" width="13" height="12" viewBox="0 0 13 12"><path d="M0 0h12.500L6.200 11.500z" fill="#717171"/></svg>
<svg style="left:45px;top:1730.0px;" width="21" height="15" viewBox="0 0 21 15"><path fill="#c4c4c4" d="M0 1.500A1.500 1.500 0 0 1 1.500 0h5L8.500 2.300h6.500a1.200 1.200 0 0 1 1.200 1.200V5H5L1.500 13 0 13.500z"/><path fill="#c4c4c4" d="M5.800 6.200h14.700L16.500 15H1.800z"/></svg>
<div class="t " style="left:70px;top:1725.5px;color:#c9c9c9;letter-spacing:.45px">Samples</div>
<svg style="left:45px;top:1756.0px;" width="13" height="12" viewBox="0 0 13 12"><path d="M0 0h12.500L6.200 11.500z" fill="#717171"/></svg>
<svg style="left:66px;top:1754.0px;" width="21" height="15" viewBox="0 0 21 15"><path fill="#c4c4c4" d="M0 1.500A1.500 1.500 0 0 1 1.500 0h5L8.500 2.300h6.500a1.200 1.200 0 0 1 1.200 1.200V5H5L1.500 13 0 13.500z"/><path fill="#c4c4c4" d="M5.800 6.200h14.700L16.500 15H1.800z"/></svg>
<div class="t " style="left:91px;top:1749.5px;color:#c9c9c9;letter-spacing:.45px">Depthkit Core Shader Graph</div>
<svg style="left:66px;top:1780.0px;" width="13" height="12" viewBox="0 0 13 12"><path d="M0 0h12.500L6.200 11.500z" fill="#717171"/></svg>
<svg style="left:87px;top:1778.0px;" width="21" height="15" viewBox="0 0 21 15"><path fill="#c4c4c4" d="M0 1.500A1.500 1.500 0 0 1 1.500 0h5L8.500 2.300h6.500a1.200 1.200 0 0 1 1.200 1.200V5H5L1.500 13 0 13.500z"/><path fill="#c4c4c4" d="M5.800 6.200h14.700L16.500 15H1.800z"/></svg>
<div class="t " style="left:112px;top:1773.5px;color:#c9c9c9;letter-spacing:.45px">0.1.1</div>
<div class="a" style="left:0;top:1797px;width:436px;height:24px;overflow:hidden">
<svg style="left:108px;top:5px;" width="18" height="15" viewBox="0 0 18 15"><path fill="#c4c4c4" d="M0 1.500A1.500 1.500 0 0 1 1.500 0h5.800L9.500 2.800h7a1.500 1.500 0 0 1 1.500 1.500V13.500a1.500 1.500 0 0 1-1.500 1.500h-15A1.500 1.500 0 0 1 0 13.500z"/></svg>
<div class="t " style="left:133px;top:0px;color:#c9c9c9;letter-spacing:.45px">Prefabs - Depthkit Core Shader Graph</div>
</div>
<svg style="left:45px;top:1828.0px;" width="13" height="12" viewBox="0 0 13 12"><path d="M0 0h12.500L6.200 11.500z" fill="#717171"/></svg>
<svg style="left:66px;top:1826.0px;" width="21" height="15" viewBox="0 0 21 15"><path fill="#c4c4c4" d="M0 1.500A1.500 1.500 0 0 1 1.500 0h5L8.500 2.300h6.500a1.200 1.200 0 0 1 1.200 1.200V5H5L1.500 13 0 13.500z"/><path fill="#c4c4c4" d="M5.800 6.200h14.700L16.500 15H1.800z"/></svg>
<div class="t " style="left:91px;top:1821.5px;color:#c9c9c9;letter-spacing:.45px">Depthkit Core VFX Graph</div>
<svg style="left:68.5px;top:1851.0px;" width="12" height="13" viewBox="0 0 12 13"><path d="M0 0l11.500 6.500L0 13z" fill="#717171"/></svg>
<svg style="left:87px;top:1850.5px;" width="18" height="15" viewBox="0 0 18 15"><path fill="#c4c4c4" d="M0 1.500A1.500 1.500 0 0 1 1.500 0h5.800L9.500 2.800h7a1.500 1.500 0 0 1 1.500 1.500V13.500a1.500 1.500 0 0 1-1.500 1.500h-15A1.500 1.500 0 0 1 0 13.500z"/></svg>
<div class="t " style="left:112px;top:1845.5px;color:#c9c9c9;letter-spacing:.45px">0.1.1</div>
<svg style="left:26.5px;top:1875.0px;" width="12" height="13" viewBox="0 0 12 13"><path d="M0 0l11.500 6.500L0 13z" fill="#717171"/></svg>
<svg style="left:45px;top:1874.5px;" width="18" height="15" viewBox="0 0 18 15"><path fill="#c4c4c4" d="M0 1.500A1.500 1.500 0 0 1 1.500 0h5.800L9.500 2.800h7a1.500 1.500 0 0 1 1.500 1.500V13.500a1.500 1.500 0 0 1-1.500 1.500h-15A1.500 1.500 0 0 1 0 13.500z"/></svg>
<div class="t " style="left:70px;top:1869.5px;color:#c9c9c9;letter-spacing:.45px">Scenes</div>
<svg style="left:45px;top:1898.5px;" width="18" height="15" viewBox="0 0 18 15"><path fill="#c4c4c4" d="M0 1.500A1.500 1.500 0 0 1 1.500 0h5.800L9.500 2.800h7a1.500 1.500 0 0 1 1.500 1.500V13.500a1.500 1.500 0 0 1-1.500 1.500h-15A1.500 1.500 0 0 1 0 13.500z"/></svg>
<div class="t " style="left:70px;top:1893.5px;color:#c9c9c9;letter-spacing:.45px">Scripts</div>
<svg style="left:45px;top:1922.5px;" width="18" height="15" viewBox="0 0 18 15"><path fill="#c4c4c4" d="M0 1.500A1.500 1.500 0 0 1 1.500 0h5.800L9.500 2.800h7a1.500 1.500 0 0 1 1.500 1.500V13.500a1.500 1.500 0 0 1-1.500 1.500h-15A1.500 1.500 0 0 1 0 13.500z"/></svg>
<div class="t " style="left:70px;top:1917.5px;color:#c9c9c9;letter-spacing:.45px">Settings</div>
<svg style="left:26.5px;top:1947.0px;" width="12" height="13" viewBox="0 0 12 13"><path d="M0 0l11.500 6.500L0 13z" fill="#717171"/></svg>
<svg style="left:45px;top:1946.5px;" width="18" height="15" viewBox="0 0 18 15"><path fill="#c4c4c4" d="M0 1.500A1.500 1.500 0 0 1 1.500 0h5.800L9.500 2.800h7a1.500 1.500 0 0 1 1.500 1.500V13.500a1.500 1.500 0 0 1-1.500 1.500h-15A1.500 1.500 0 0 1 0 13.500z"/></svg>
<div class="t " style="left:70px;top:1941.5px;color:#c9c9c9;letter-spacing:.45px">TutorialInfo</div>
<div class="a" style="left:0px;top:1961px;width:3027px;height:2px;background:#191919;"></div>
<div class="a" style="left:3027px;top:0px;width:1px;height:1963px;background:#1a4650;"></div>
<div class="m" style="left:603px;top:907px;width:392px;height:727.0px;">
<div class="i h" style="top:2.0px"><span style="left:41px">Create</span><svg style="right:8px;top:9px;left:auto" width="8" height="13" viewBox="0 0 8 13"><path d="M1 1l5.500 5.500L1 12" fill="none" stroke="#222" stroke-width="1.300"/></svg></div>
<div class="i" style="top:33.0px"><span style="left:41px">Show in Explorer</span></div>
<div class="i" style="top:64.0px"><span style="left:41px">Open</span></div>
<div class="i" style="top:95.0px"><span style="left:41px">Delete</span></div>
<div class="i" style="top:126.0px"><span style="left:41px">Rename</span></div>
<div class="i" style="top:157.0px"><span style="left:41px">Copy Path</span><span style="right:20px">Alt+Ctrl+C</span></div>
<div class="s" style="left:40px;right:3px;top:190.5px"></div>
<div class="i d" style="top:195.0px"><span style="left:41px">Open Scene Additive</span></div>
<div class="s" style="left:40px;right:3px;top:228.5px"></div>
<div class="i d" style="top:233.0px"><span style="left:41px">View in Package Manager</span></div>
<div class="s" style="left:40px;right:3px;top:266.5px"></div>
<div class="i" style="top:271.0px"><span style="left:41px">Import New Asset...</span></div>
<div class="i" style="top:302.0px"><span style="left:41px">Import Package</span><svg style="right:8px;top:9px;left:auto" width="8" height="13" viewBox="0 0 8 13"><path d="M1 1l5.500 5.500L1 12" fill="none" stroke="#222" stroke-width="1.300"/></svg></div>
<div class="i" style="top:333.0px"><span style="left:41px">Export Package...</span></div>
<div class="i d" style="top:364.0px"><span style="left:41px">Find References In Scene</span></div>
<div class="i" style="top:395.0px"><span style="left:41px">Select Dependencies</span></div>
<div class="s" style="left:40px;right:3px;top:428.5px"></div>
<div class="i" style="top:433.0px"><span style="left:41px">Refresh</span><span style="right:20px">Ctrl+R</span></div>
<div class="i" style="top:464.0px"><span style="left:41px">Reimport</span></div>
<div class="s" style="left:40px;right:3px;top:497.5px"></div>
<div class="i" style="top:502.0px"><span style="left:41px">Reimport All</span></div>
<div class="s" style="left:40px;right:3px;top:535.5px"></div>
<div class="i d" style="top:540.0px"><span style="left:41px">Extract From Prefab</span></div>
<div class="s" style="left:40px;right:3px;top:573.5px"></div>
<div class="i d" style="top:578.0px"><span style="left:41px">Run API Updater...</span></div>
<div class="s" style="left:40px;right:3px;top:611.5px"></div>
<div class="i" style="top:616.0px"><span style="left:41px">Update UXML Schema</span></div>
<div class="s" style="left:40px;right:3px;top:649.5px"></div>
<div class="i" style="top:654.0px"><span style="left:41px">Open C# Project</span></div>
<div class="s" style="left:40px;right:3px;top:687.5px"></div>
<div class="i" style="top:692.0px"><span style="left:41px">Properties...</span><span style="right:20px">Alt+P</span></div>
</div>
<div class="m" style="left:991px;top:805px;width:350px;height:1158px;border-bottom:none;">
<div class="i" style="top:2.0px"><span style="left:41px">Folder</span></div>
<div class="s" style="left:40px;right:3px;top:35.5px"></div>
<div class="i" style="top:40.0px"><span style="left:41px">C# Script</span></div>
<div class="i h" style="top:71.0px"><span style="left:41px">Shader</span><svg style="right:8px;top:9px;left:auto" width="8" height="13" viewBox="0 0 8 13"><path d="M1 1l5.500 5.500L1 12" fill="none" stroke="#222" stroke-width="1.300"/></svg></div>
<div class="i" style="top:102.0px"><span style="left:41px">Testing</span><svg style="right:8px;top:9px;left:auto" width="8" height="13" viewBox="0 0 8 13"><path d="M1 1l5.500 5.500L1 12" fill="none" stroke="#222" stroke-width="1.300"/></svg></div>
<div class="i" style="top:133.0px"><span style="left:41px">Playables</span><svg style="right:8px;top:9px;left:auto" width="8" height="13" viewBox="0 0 8 13"><path d="M1 1l5.500 5.500L1 12" fill="none" stroke="#222" stroke-width="1.300"/></svg></div>
<div class="i" style="top:164.0px"><span style="left:41px">Assembly Definition</span></div>
<div class="i" style="top:195.0px"><span style="left:41px">Assembly Definition Reference</span></div>
<div class="i" style="top:226.0px"><span style="left:41px">TextMeshPro</span><svg style="right:8px;top:9px;left:auto" width="8" height="13" viewBox="0 0 8 13"><path d="M1 1l5.500 5.500L1 12" fill="none" stroke="#222" stroke-width="1.300"/></svg></div>
<div class="s" style="left:40px;right:3px;top:259.5px"></div>
<div class="i" style="top:264.0px"><span style="left:41px">HD Template Scene</span></div>
<div class="i" style="top:295.0px"><span style="left:41px">Scene</span></div>
<div class="i" style="top:326.0px"><span style="left:41px">Volume Profile</span></div>
<div class="i d" style="top:357.0px"><span style="left:41px">Prefab Variant</span></div>
<div class="s" style="left:40px;right:3px;top:390.5px"></div>
<div class="i" style="top:395.0px"><span style="left:41px">Audio Mixer</span></div>
<div class="s" style="left:40px;right:3px;top:428.5px"></div>
<div class="i" style="top:433.0px"><span style="left:41px">Rendering</span><svg style="right:8px;top:9px;left:auto" width="8" height="13" viewBox="0 0 8 13"><path d="M1 1l5.500 5.500L1 12" fill="none" stroke="#222" stroke-width="1.300"/></svg></div>
<div class="s" style="left:40px;right:3px;top:466.5px"></div>
<div class="i" style="top:471.0px"><span style="left:41px">Material</span></div>
<div class="i" style="top:502.0px"><span style="left:41px">Lens Flare</span></div>
<div class="i" style="top:533.0px"><span style="left:41px">Render Texture</span></div>
<div class="i" style="top:564.0px"><span style="left:41px">Lightmap Parameters</span></div>
<div class="i" style="top:595.0px"><span style="left:41px">Lighting Settings</span></div>
<div class="i" style="top:626.0px"><span style="left:41px">Visual Effects</span><svg style="right:8px;top:9px;left:auto" width="8" height="13" viewBox="0 0 8 13"><path d="M1 1l5.500 5.500L1 12" fill="none" stroke="#222" stroke-width="1.300"/></svg></div>
<div class="i" style="top:657.0px"><span style="left:41px">Custom Render Texture</span></div>
<div class="s" style="left:40px;right:3px;top:690.5px"></div>
<div class="i" style="top:695.0px"><span style="left:41px">Sprite Atlas</span></div>
<div class="i" style="top:726.0px"><span style="left:41px">Sprites</span><svg style="right:8px;top:9px;left:auto" width="8" height="13" viewBox="0 0 8 13"><path d="M1 1l5.500 5.500L1 12" fill="none" stroke="#222" stroke-width="1.300"/></svg></div>
<div class="s" style="left:40px;right:3px;top:759.5px"></div>
<div class="i" style="top:764.0px"><span style="left:41px">Animator Controller</span></div>
<div class="i" style="top:795.0px"><span style="left:41px">Animation</span></div>
<div class="i" style="top:826.0px"><span style="left:41px">Animator Override Controller</span></div>
<div class="i" style="top:857.0px"><span style="left:41px">Avatar Mask</span></div>
<div class="s" style="left:40px;right:3px;top:890.5px"></div>
<div class="i" style="top:895.0px"><span style="left:41px">Timeline</span></div>
<div class="i" style="top:926.0px"><span style="left:41px">Signal</span></div>
<div class="s" style="left:40px;right:3px;top:959.5px"></div>
<div class="i" style="top:964.0px"><span style="left:41px">Physic Material</span></div>
<div class="i" style="top:995.0px"><span style="left:41px">Physics Material 2D</span></div>
<div class="s" style="left:40px;right:3px;top:1028.5px"></div>
<div class="i" style="top:1033.0px"><span style="left:41px">GUI Skin</span></div>
<div class="i" style="top:1064.0px"><span style="left:41px">Custom Font</span></div>
<div class="i" style="top:1095.0px"><span style="left:41px">UI Toolkit</span><svg style="right:8px;top:9px;left:auto" width="8" height="13" viewBox="0 0 8 13"><path d="M1 1l5.500 5.500L1 12" fill="none" stroke="#222" stroke-width="1.300"/></svg></div>
<div class="s" style="left:40px;right:3px;top:1128.5px"></div>
<div class="i" style="top:1133.0px"><span style="left:41px">Legacy</span><svg style="right:8px;top:9px;left:auto" width="8" height="13" viewBox="0 0 8 13"><path d="M1 1l5.500 5.500L1 12" fill="none" stroke="#222" stroke-width="1.300"/></svg></div>
</div>
<div class="m" style="left:1335px;top:874px;width:307px;height:399.0px;">
<div class="i" style="top:2.0px"><span style="left:41px">Standard Surface Shader</span></div>
<div class="i" style="top:33.0px"><span style="left:41px">Unlit Shader</span></div>
<div class="i" style="top:64.0px"><span style="left:41px">Image Effect Shader</span></div>
<div class="i" style="top:95.0px"><span style="left:41px">Compute Shader</span></div>
<div class="i" style="top:126.0px"><span style="left:41px">Ray Tracing Shader</span></div>
<div class="s" style="left:40px;right:3px;top:159.5px"></div>
<div class="i" style="top:164.0px"><span style="left:41px">HDRP</span><svg style="right:8px;top:9px;left:auto" width="8" height="13" viewBox="0 0 8 13"><path d="M1 1l5.500 5.500L1 12" fill="none" stroke="#222" stroke-width="1.300"/></svg></div>
<div class="i" style="top:195.0px"><span style="left:41px">Unlit Graph</span></div>
<div class="i" style="top:226.0px"><span style="left:41px">PBR Graph</span></div>
<div class="i" style="top:257.0px"><span style="left:41px">VFX Shader Graph</span></div>
<div class="i" style="top:288.0px"><span style="left:41px">Sub Graph</span></div>
<div class="s" style="left:40px;right:3px;top:321.5px"></div>
<div class="i" style="top:326.0px"><span style="left:41px">Shader Variant Collection</span></div>
<div class="s" style="left:40px;right:3px;top:359.5px"></div>
<div class="i h" style="top:364.0px"><span style="left:41px">Depthkit</span><svg style="right:8px;top:9px;left:auto" width="8" height="13" viewBox="0 0 8 13"><path d="M1 1l5.500 5.500L1 12" fill="none" stroke="#222" stroke-width="1.300"/></svg></div>
</div>
<div class="m" style="left:1637px;top:1236px;width:315px;height:37.0px;">
<div class="i h" style="top:2.0px"><span style="left:40px">Core Look - Shader Graph</span></div>
</div>
</div></body></html>
